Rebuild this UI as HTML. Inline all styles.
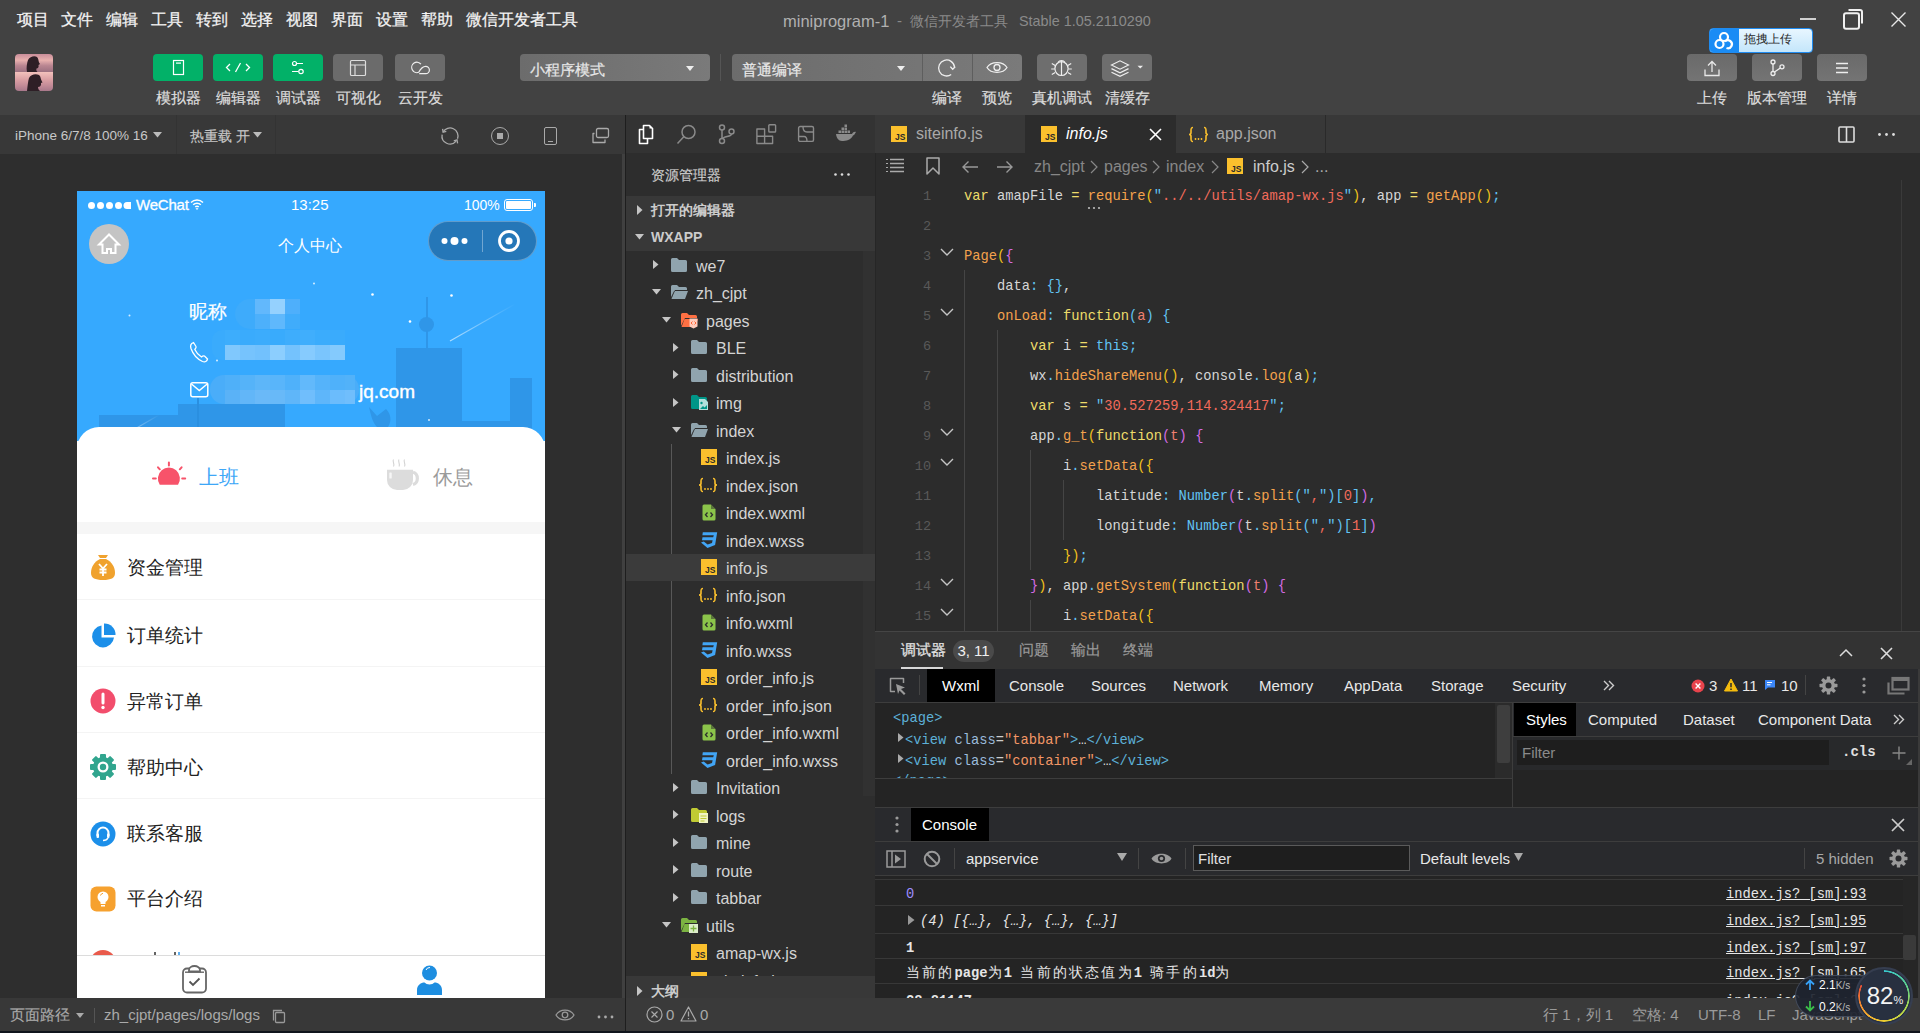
<!DOCTYPE html>
<html><head><meta charset="utf-8">
<style>
*{box-sizing:border-box}
html,body{margin:0;padding:0}
body{width:1920px;height:1033px;overflow:hidden;position:relative;background:#424242;font-family:"Liberation Sans",sans-serif;color:#ddd}
.a{position:absolute}
.t{position:absolute;white-space:nowrap}
svg{position:absolute;overflow:visible}
.mono{font-family:"Liberation Mono",monospace}
</style></head><body>

<!-- ===== MENU BAR ===== -->
<div class="a" style="left:0;top:0;width:1920px;height:115px;background:#424242"></div>
<div class="t" style="left:17px;top:0;line-height:40px;font-size:16px;color:#f4f4f4;-webkit-text-stroke:0.25px #f4f4f4">
<span style="position:absolute;left:0">项目</span><span style="position:absolute;left:44px">文件</span><span style="position:absolute;left:89px">编辑</span><span style="position:absolute;left:134px">工具</span><span style="position:absolute;left:179px">转到</span><span style="position:absolute;left:224px">选择</span><span style="position:absolute;left:269px">视图</span><span style="position:absolute;left:314px">界面</span><span style="position:absolute;left:359px">设置</span><span style="position:absolute;left:404px">帮助</span><span style="position:absolute;left:449px">微信开发者工具</span>
</div>
<div class="t" style="left:783px;top:1px;line-height:40px;font-size:16.5px;color:#b0b0b0">miniprogram-1</div>
<div class="t" style="left:897px;top:1px;line-height:40px;font-size:15px;color:#8a8a8a">-</div>
<div class="t" style="left:910px;top:1px;line-height:40px;font-size:14px;color:#8a8a8a">微信开发者工具</div>
<div class="t" style="left:1019px;top:1px;line-height:40px;font-size:14.4px;color:#8a8a8a">Stable 1.05.2110290</div>

<!-- window controls -->
<div class="a" style="left:1800px;top:18px;width:16px;height:2px;background:#d0d0d0"></div>
<svg style="left:1842px;top:8px" width="22" height="22"><rect x="2" y="5.2" width="15" height="15.5" rx="2" fill="none" stroke="#f0f0f0" stroke-width="2"/><path d="M6.5 2H18A2 2 0 0 1 20 4V15.5" fill="none" stroke="#f0f0f0" stroke-width="2"/></svg>
<svg style="left:1891px;top:12px" width="15" height="15"><path d="M0.5 0.5L14.5 14.5M14.5 0.5L0.5 14.5" stroke="#e8e8e8" stroke-width="1.4"/></svg>


<!-- ===== TOOLBAR ===== -->
<div class="a" style="left:15px;top:54px;width:38px;height:37px;border-radius:4px;overflow:hidden">
 <div class="a" style="left:0;top:0;width:38px;height:18px;background:linear-gradient(180deg,#c98e9a 0%,#e8b0ae 35%,#b98591 65%,#9c7080 100%)"></div>
 <div class="a" style="left:0;top:18px;width:38px;height:19px;background:linear-gradient(180deg,#f3c2bc 0%,#dba0a4 40%,#c48c98 70%,#a8788a 100%)"></div>
 <svg style="left:0;top:0" width="38" height="37"><path d="M12 18C11 14 12 9 13 6C15 2 20 1.5 22 3C23.5 4.5 23.5 7 24 8.5L25 10L23.5 11C24 13 23 14.5 21.5 14.5C21 16 21.5 17 22.5 18Z" fill="#2e1f26"/><path d="M12 37C12.5 33 13 27 14 24C16 20 21 19.5 24 21C26 22.5 25.5 25 26.5 26.5L27.5 28.5L26 29C26.5 31.5 25 33 23 33C23 35 24 36 25 37Z" fill="#2e1f26"/></svg>
</div>
<div class="a" style="left:153px;top:54px;width:50px;height:27px;border-radius:4px;background:#02b168"></div>
<div class="a" style="left:213px;top:54px;width:50px;height:27px;border-radius:4px;background:#02b168"></div>
<div class="a" style="left:273px;top:54px;width:50px;height:27px;border-radius:4px;background:#02b168"></div>
<div class="a" style="left:333px;top:54px;width:50px;height:27px;border-radius:4px;background:#6b6b6b"></div>
<div class="a" style="left:395px;top:54px;width:50px;height:27px;border-radius:4px;background:#6b6b6b"></div>
<svg style="left:153px;top:54px" width="50" height="27"><rect x="20.5" y="6.5" width="10" height="14" fill="none" stroke="#fff" stroke-width="1.2"/><rect x="23" y="8.5" width="5" height="1.2" fill="#fff"/></svg>
<svg style="left:213px;top:54px" width="50" height="27"><path d="M17 10L13.5 13.5L17 17M33 10L36.5 13.5L33 17M27.5 9L22.5 18" fill="none" stroke="#fff" stroke-width="1.3"/></svg>
<svg style="left:273px;top:54px" width="50" height="27"><circle cx="21.5" cy="9.5" r="2" fill="none" stroke="#fff" stroke-width="1.2"/><path d="M23.5 9.5H30M19 17.5H25.5" stroke="#fff" stroke-width="1.2"/><circle cx="28" cy="17.5" r="2.2" fill="none" stroke="#fff" stroke-width="1.2"/></svg>
<svg style="left:333px;top:54px" width="50" height="27"><rect x="17.5" y="6.5" width="15" height="15" rx="1" fill="none" stroke="#ddd" stroke-width="1.2"/><path d="M17.5 11H32.5M22 11V21.5" stroke="#ddd" stroke-width="1.2"/></svg>
<svg style="left:395px;top:54px" width="50" height="27"><path d="M25.9 10.1A5.2 5.2 0 1 0 23.7 18.3C25.3 15.3 27.3 12.3 30.7 12.3A3.7 3.7 0 0 1 30.7 19.7H24.2" fill="none" stroke="#eee" stroke-width="1.2"/></svg>
<div class="t" style="left:153px;top:88px;width:50px;text-align:center;font-size:15px;line-height:19px;color:#dcdcdc;-webkit-text-stroke:0.2px #dcdcdc">模拟器</div>
<div class="t" style="left:213px;top:88px;width:50px;text-align:center;font-size:15px;line-height:19px;color:#dcdcdc;-webkit-text-stroke:0.2px #dcdcdc">编辑器</div>
<div class="t" style="left:273px;top:88px;width:50px;text-align:center;font-size:15px;line-height:19px;color:#dcdcdc;-webkit-text-stroke:0.2px #dcdcdc">调试器</div>
<div class="t" style="left:333px;top:88px;width:50px;text-align:center;font-size:15px;line-height:19px;color:#dcdcdc;-webkit-text-stroke:0.2px #dcdcdc">可视化</div>
<div class="t" style="left:395px;top:88px;width:50px;text-align:center;font-size:15px;line-height:19px;color:#dcdcdc;-webkit-text-stroke:0.2px #dcdcdc">云开发</div>

<!-- mode dropdown -->
<div class="a" style="left:520px;top:54px;width:190px;height:27px;border-radius:4px;background:linear-gradient(90deg,#6c6c6c,#7a7a7a)"></div>
<div class="t" style="left:530px;top:56px;line-height:27px;font-size:15px;color:#e8e8e8;-webkit-text-stroke:0.2px #e8e8e8">小程序模式</div>
<svg style="left:686px;top:65.5px" width="8" height="6"><path d="M0 0H8L4 5Z" fill="#eee"/></svg>
<div class="a" style="left:720px;top:54px;width:1px;height:27px;background:#555"></div>
<!-- compile dropdown group -->
<div class="a" style="left:732px;top:54px;width:290px;height:27px;border-radius:4px;background:linear-gradient(90deg,#6c6c6c,#7a7a7a)"></div>
<div class="a" style="left:922px;top:54px;width:1px;height:27px;background:#5e5e5e"></div>
<div class="a" style="left:972px;top:54px;width:1px;height:27px;background:#5e5e5e"></div>
<div class="t" style="left:742px;top:56px;line-height:27px;font-size:15px;color:#e8e8e8;-webkit-text-stroke:0.2px #e8e8e8">普通编译</div>
<svg style="left:897px;top:65.5px" width="8" height="6"><path d="M0 0H8L4 5Z" fill="#eee"/></svg>
<svg style="left:922px;top:54px" width="50" height="27"><path d="M29.2 20.55A8 8 0 1 1 32.57 13.1" fill="none" stroke="#eee" stroke-width="1.3"/><path d="M28.3 12.6L30.7 15.2L33.2 12.8" fill="none" stroke="#eee" stroke-width="1.4"/></svg>
<svg style="left:972px;top:54px" width="50" height="27"><path d="M15 13.5C19 7 31 7 35 13.5C31 20 19 20 15 13.5Z" fill="none" stroke="#eee" stroke-width="1.3"/><circle cx="25" cy="13.5" r="3" fill="none" stroke="#eee" stroke-width="1.3"/></svg>
<div class="a" style="left:1037px;top:54px;width:50px;height:27px;border-radius:4px;background:#6e6e6e"></div>
<svg style="left:1037px;top:54px" width="50" height="27"><ellipse cx="24.5" cy="14.6" rx="6.6" ry="6.9" fill="none" stroke="#eee" stroke-width="1.2"/><path d="M21.2 8.2A3.6 2.8 0 0 1 27.8 8.2M24.5 7.8V21.5M18.2 11.5L14.8 9.5M17.9 15H14.2M18.2 18.5L14.8 20.5M30.8 11.5L34.2 9.5M31.1 15H34.8M30.8 18.5L34.2 20.5" fill="none" stroke="#eee" stroke-width="1.2"/></svg>
<div class="a" style="left:1102px;top:54px;width:50px;height:27px;border-radius:4px;background:#6e6e6e"></div>
<svg style="left:1102px;top:54px" width="50" height="27"><path d="M9.5 11L18 6.8L26.5 11L18 15.2Z" fill="none" stroke="#eee" stroke-width="1.2"/><path d="M9.5 14.6L18 18.8L26.5 14.6M9.5 18.2L18 22.4L26.5 18.2" fill="none" stroke="#eee" stroke-width="1.2"/><path d="M35.5 11.8H41L38.25 14.6Z" fill="#eee"/></svg>
<div class="t" style="left:922px;top:88px;width:50px;text-align:center;font-size:15px;line-height:19px;color:#dcdcdc;-webkit-text-stroke:0.2px #dcdcdc">编译</div>
<div class="t" style="left:972px;top:88px;width:50px;text-align:center;font-size:15px;line-height:19px;color:#dcdcdc;-webkit-text-stroke:0.2px #dcdcdc">预览</div>
<div class="t" style="left:1027px;top:88px;width:70px;text-align:center;font-size:15px;line-height:19px;color:#dcdcdc;-webkit-text-stroke:0.2px #dcdcdc">真机调试</div>
<div class="t" style="left:1092px;top:88px;width:70px;text-align:center;font-size:15px;line-height:19px;color:#dcdcdc;-webkit-text-stroke:0.2px #dcdcdc">清缓存</div>

<!-- right toolbar -->
<div class="a" style="left:1687px;top:54px;width:50px;height:27px;border-radius:4px;background:linear-gradient(180deg,#6a6a6a,#747474)"></div>
<div class="a" style="left:1752px;top:54px;width:50px;height:27px;border-radius:4px;background:linear-gradient(180deg,#6a6a6a,#747474)"></div>
<div class="a" style="left:1817px;top:54px;width:50px;height:27px;border-radius:4px;background:linear-gradient(180deg,#6a6a6a,#747474)"></div>
<svg style="left:1687px;top:54px" width="50" height="27"><path d="M18 15.5V21.5H32V15.5M25 18V8M21 11.5L25 7.5L29 11.5" fill="none" stroke="#e8e8e8" stroke-width="1.3"/></svg>
<svg style="left:1752px;top:54px" width="50" height="27"><circle cx="21" cy="8" r="2" fill="none" stroke="#eee" stroke-width="1.3"/><circle cx="21" cy="19.5" r="2" fill="none" stroke="#eee" stroke-width="1.3"/><circle cx="30" cy="12.8" r="2" fill="none" stroke="#eee" stroke-width="1.3"/><path d="M21 10V17.5M22.5 18L28.3 14" fill="none" stroke="#eee" stroke-width="1.3"/></svg>
<svg style="left:1817px;top:54px" width="50" height="27"><path d="M19 9.5H31M19 14H31M19 18.5H31" stroke="#eee" stroke-width="1.3"/></svg>
<div class="t" style="left:1687px;top:88px;width:50px;text-align:center;font-size:15px;line-height:19px;color:#dcdcdc;-webkit-text-stroke:0.2px #dcdcdc">上传</div>
<div class="t" style="left:1742px;top:88px;width:70px;text-align:center;font-size:15px;line-height:19px;color:#dcdcdc;-webkit-text-stroke:0.2px #dcdcdc">版本管理</div>
<div class="t" style="left:1817px;top:88px;width:50px;text-align:center;font-size:15px;line-height:19px;color:#dcdcdc;-webkit-text-stroke:0.2px #dcdcdc">详情</div>
<!-- drag upload popup -->
<div class="a" style="left:1709px;top:28px;width:104px;height:25px;border-radius:4px;background:linear-gradient(180deg,#e8f6ff,#c4e6fb);border:1px solid #1f8bf0;overflow:hidden">
 <div class="a" style="left:0;top:0;width:29px;height:23px;background:#1a8cf5"></div>
</div>
<svg style="left:1709px;top:28px" width="30" height="25"><circle cx="15" cy="9" r="4" fill="none" stroke="#fff" stroke-width="2.2"/><circle cx="10.5" cy="16" r="4" fill="none" stroke="#fff" stroke-width="2.2"/><path d="M16 13.5A4 4 0 1 1 17.5 20" fill="none" stroke="#fff" stroke-width="2.2"/></svg>
<div class="t" style="left:1744px;top:27px;line-height:25px;font-size:12px;color:#2a2a2a">拖拽上传</div>

<!-- ===== PANELS BACKGROUNDS ===== -->
<!-- simulator -->
<div class="a" style="left:0;top:115px;width:625px;height:39px;background:#383838"></div>
<div class="a" style="left:0;top:154px;width:625px;height:844px;background:#2e2e2e"></div>
<div class="a" style="left:0;top:998px;width:625px;height:33px;background:#383838"></div>
<div class="a" style="left:625px;top:115px;width:1px;height:916px;background:#1e1e1e"></div>
<!-- explorer -->
<div class="a" style="left:626px;top:115px;width:249px;height:38px;background:#333333"></div>
<div class="a" style="left:626px;top:153px;width:249px;height:845px;background:#2d2d2d"></div>
<!-- editor -->
<div class="a" style="left:875px;top:115px;width:1045px;height:38px;background:#383838"></div>
<div class="a" style="left:875px;top:153px;width:1045px;height:478px;background:#2c2c2c"></div>
<!-- debugger -->
<div class="a" style="left:875px;top:631px;width:1045px;height:38px;background:#333333;border-top:1px solid #454545"></div>
<div class="a" style="left:875px;top:669px;width:1045px;height:329px;background:#242424"></div>
<!-- status bar -->
<div class="a" style="left:626px;top:998px;width:1294px;height:33px;background:#3a3a3a"></div>
<div class="a" style="left:0;top:1031px;width:1920px;height:2px;background:#10141c"></div>


<!-- ===== SIMULATOR ===== -->
<div class="t" style="left:15px;top:116px;line-height:39px;font-size:13.5px;color:#c8c8c8">iPhone 6/7/8 100% 16</div>
<svg style="left:153px;top:132px" width="9" height="6"><path d="M0 0H9L4.5 5.5Z" fill="#bbb"/></svg>
<div class="a" style="left:176px;top:115px;width:1px;height:39px;background:#333"></div>
<div class="t" style="left:190px;top:116.5px;line-height:39px;font-size:14px;color:#c8c8c8;-webkit-text-stroke:0.15px #c8c8c8">热重载 开</div>
<svg style="left:253px;top:132px" width="9" height="6"><path d="M0 0H9L4.5 5.5Z" fill="#bbb"/></svg>
<div class="a" style="left:275px;top:115px;width:1px;height:39px;background:#333"></div>
<svg style="left:440px;top:126px" width="20" height="20"><path d="M3.07 6A8 8 0 0 1 17.52 12.74M16.13 15.14A8 8 0 0 1 2.12 8.61" fill="none" stroke="#aaa" stroke-width="1.3"/><path d="M2.6 2.8L3.1 6.2L6.3 5.3M17.6 17.3L17 13.9L13.8 14.8" fill="none" stroke="#aaa" stroke-width="1.3"/></svg>
<div class="a" style="left:491px;top:127px;width:18px;height:18px;border:1.4px solid #aaa;border-radius:50%"></div>
<div class="a" style="left:497px;top:133px;width:6px;height:6px;background:#aaa"></div>
<div class="a" style="left:544px;top:127px;width:13px;height:18px;border:1.3px solid #aaa;border-radius:2px"></div>
<div class="a" style="left:548px;top:141px;width:5px;height:1.3px;background:#aaa"></div>
<svg style="left:591px;top:127px" width="20" height="18"><rect x="5.5" y="1.5" width="12" height="9" rx="1.5" fill="none" stroke="#aaa" stroke-width="1.3"/><path d="M3.5 6.5H2V15.5H14V12.5" fill="none" stroke="#aaa" stroke-width="1.3" stroke-linejoin="round"/></svg>
<!-- sim scrollbar -->
<div class="a" style="left:622px;top:154px;width:3px;height:844px;background:#404040"></div>

<!-- phone -->
<div class="a" style="left:77px;top:191px;width:468px;height:807px;background:#fff;overflow:hidden">
 <div class="a" style="left:0;top:0;width:468px;height:250px;background:#36a9fe"></div>
 <!-- city silhouette -->
 <div class="a" style="left:22px;top:224px;width:80px;height:30px;background:#2f96e8"></div>
 <div class="a" style="left:101px;top:213px;width:107px;height:40px;background:#2f96e8"></div>
 <div class="a" style="left:120px;top:207px;width:2px;height:30px;background:#2a8fe0"></div>
 <div class="a" style="left:319px;top:157px;width:66px;height:100px;background:#2f96e8"></div>
 <div class="a" style="left:349px;top:106px;width:2px;height:54px;background:#2f96e8"></div>
 <div class="a" style="left:342px;top:126px;width:15px;height:15px;border-radius:50%;background:#2f96e8"></div>
 <div class="a" style="left:385px;top:230px;width:48px;height:30px;background:#2f96e8"></div>
 <div class="a" style="left:433px;top:187px;width:22px;height:70px;background:#2f96e8"></div>
 <svg style="left:291px;top:215px" width="26" height="22"><path d="M1 1L9 10L18 3C23 8 24 15 20 21H9C5 17 3 10 1 1Z" fill="#2f96e8"/></svg>
 <div class="a" style="left:43px;top:262px;width:2px;height:2px;background:#fff"></div>
 <svg style="left:0;top:0" width="468" height="250">
  <defs><linearGradient id="ss" x1="0" y1="1" x2="1" y2="0"><stop offset="0" stop-color="#fff" stop-opacity="0.6"/><stop offset="1" stop-color="#fff" stop-opacity="0"/></linearGradient></defs><path d="M373 150L438 113" stroke="url(#ss)" stroke-width="1.2"/><path d="M44 246L82 224" stroke="url(#ss)" stroke-width="1.2"/>
  <circle cx="237" cy="92.5" r="1" fill="#fff" opacity="0.8"/><circle cx="295.5" cy="103.5" r="1.3" fill="#fff"/><circle cx="374.5" cy="104.5" r="1.3" fill="#fff"/>
  <circle cx="333" cy="130.5" r="1.3" fill="#fff"/><circle cx="52.5" cy="124.5" r="1" fill="#fff" opacity="0.8"/><circle cx="140" cy="169.5" r="1" fill="#fff" opacity="0.8"/>
  <circle cx="352" cy="229" r="1" fill="#fff" opacity="0.8"/>
 </svg>
 <!-- status bar -->
 <svg style="left:11px;top:10px" width="50" height="9"><circle cx="3.5" cy="4.5" r="3.5" fill="#fff"/><circle cx="12.5" cy="4.5" r="3.5" fill="#fff"/><circle cx="21.5" cy="4.5" r="3.5" fill="#fff"/><circle cx="30.5" cy="4.5" r="3.5" fill="#fff"/><path d="M39 1A3.5 3.5 0 0 0 39 8H43V1Z" fill="#fff"/></svg>
 <div class="t" style="left:59px;top:4px;line-height:20px;font-size:15px;color:#fff;-webkit-text-stroke:0.3px #fff;letter-spacing:-0.2px">WeChat</div>
 <svg style="left:113px;top:7px" width="14" height="12"><path d="M1 4.5A8.5 8.5 0 0 1 13 4.5M3.2 6.8A5.3 5.3 0 0 1 10.8 6.8M5.3 9A2.3 2.3 0 0 1 8.7 9" fill="none" stroke="#fff" stroke-width="1.5"/><path d="M5.5 10.2L7 12L8.5 10.2Z" fill="#fff"/></svg>
 <div class="t" style="left:214px;top:4px;line-height:20px;font-size:15px;color:#fff">13:25</div>
 <div class="t" style="left:387px;top:4px;line-height:20px;font-size:14px;color:#fff">100%</div>
 <div class="a" style="left:427px;top:8px;width:29px;height:12px;border:1px solid #fff;border-radius:3px"></div>
 <div class="a" style="left:429px;top:10px;width:25px;height:8px;background:#fff;border-radius:1px"></div>
 <div class="a" style="left:457px;top:12px;width:2px;height:4px;background:#fff;border-radius:0 1px 1px 0"></div>
 <!-- nav -->
 <div class="a" style="left:12px;top:33px;width:40px;height:40px;border-radius:50%;background:#c4c4c4"></div>
 <svg style="left:12px;top:33px" width="40" height="40"><path d="M20 10.5L10 20.5H13.5V29H18V25H22V29H26.5V20.5H30Z" fill="none" stroke="#fff" stroke-width="2" stroke-linejoin="miter"/></svg>
 <div class="t" style="left:201px;top:44px;line-height:22px;font-size:16px;color:#fff">个人中心</div>
 <div class="a" style="left:351px;top:30px;width:109px;height:40px;border-radius:20px;background:#2577b8;border:1px solid rgba(255,255,255,0.28)"></div>
 <div class="a" style="left:405px;top:39px;width:1px;height:22px;background:rgba(255,255,255,0.35)"></div>
 <svg style="left:351px;top:30px" width="109" height="40"><circle cx="16.5" cy="20" r="3" fill="#fff"/><circle cx="26.5" cy="20" r="4" fill="#fff"/><circle cx="36.5" cy="20" r="3" fill="#fff"/><circle cx="81" cy="20" r="9.5" fill="none" stroke="#fff" stroke-width="2.8"/><circle cx="81" cy="20" r="3.6" fill="#fff"/></svg>
 <!-- user info -->
 <div class="t" style="left:112px;top:109px;line-height:24px;font-size:19px;color:#fff;-webkit-text-stroke:0.2px #fff">昵称</div>
 <div class="a" style="left:158px;top:108px;width:65px;height:30px;border-radius:15px 0 0 15px;background:#3eabfb"></div>
 <div class="a" style="left:178px;top:108px;width:15px;height:15px;background:#62b8fc"></div>
 <div class="a" style="left:193px;top:108px;width:15px;height:15px;background:#95d1fe"></div>
 <div class="a" style="left:208px;top:108px;width:15px;height:15px;background:#4eaffb"></div>
 <div class="a" style="left:178px;top:123px;width:15px;height:15px;background:#4db0fb"></div>
 <div class="a" style="left:193px;top:123px;width:15px;height:15px;background:#5fb8fc"></div>
 <div class="a" style="left:208px;top:123px;width:15px;height:15px;background:#40acfb"></div>
 <svg style="left:112px;top:150px" width="20" height="22"><path d="M4.5 1.5C2 2.5 1 4.5 2 7.5C4 13 8 18 13.5 20.5C16 21.3 18 20.5 18.5 18L15.5 15C14.5 14.5 13 15.5 12.5 16C10 14.5 7 11 5.8 8.5C6.5 7.5 7.5 6.5 7 5.5Z" fill="none" stroke="#fff" stroke-width="1.3"/></svg>
 <div class="a" style="left:135px;top:139px;width:133px;height:30px;border-radius:10px 10px 0 10px;background:#3aabfc"></div>
 <div class="a" style="left:148px;top:154px;width:15px;height:15px;background:#80c8fd"></div>
 <div class="a" style="left:148px;top:139px;width:15px;height:15px;background:#3dadfc"></div>
 <div class="a" style="left:163px;top:154px;width:15px;height:15px;background:#76c3fd"></div>
 <div class="a" style="left:163px;top:139px;width:15px;height:15px;background:#3aabfc"></div>
 <div class="a" style="left:178px;top:154px;width:15px;height:15px;background:#72c1fd"></div>
 <div class="a" style="left:178px;top:139px;width:15px;height:15px;background:#3cacfc"></div>
 <div class="a" style="left:193px;top:154px;width:15px;height:15px;background:#8ccefe"></div>
 <div class="a" style="left:193px;top:139px;width:15px;height:15px;background:#39abfc"></div>
 <div class="a" style="left:208px;top:154px;width:15px;height:15px;background:#74c2fd"></div>
 <div class="a" style="left:208px;top:139px;width:15px;height:15px;background:#3eadfc"></div>
 <div class="a" style="left:223px;top:154px;width:15px;height:15px;background:#86cbfe"></div>
 <div class="a" style="left:223px;top:139px;width:15px;height:15px;background:#40aefc"></div>
 <div class="a" style="left:238px;top:154px;width:15px;height:15px;background:#7ac5fd"></div>
 <div class="a" style="left:238px;top:139px;width:15px;height:15px;background:#3bacfc"></div>
 <div class="a" style="left:253px;top:154px;width:15px;height:15px;background:#84cafd"></div>
 <div class="a" style="left:253px;top:139px;width:15px;height:15px;background:#3aabfc"></div>
 <svg style="left:113px;top:191px" width="19" height="16"><rect x="0.8" y="0.8" width="17" height="14" rx="2" fill="none" stroke="#fff" stroke-width="1.5"/><path d="M1.5 2L9.3 8.5L17.2 2" fill="none" stroke="#fff" stroke-width="1.5"/></svg>
 <div class="t" style="left:282px;top:188px;line-height:26px;font-size:19px;color:#fff;-webkit-text-stroke:0.4px #fff">jq.com</div>
 <div class="a" style="left:133px;top:184px;width:149px;height:29px;border-radius:14px;background:#4aadf9"></div>
 <div class="a" style="left:148px;top:184px;width:15px;height:15px;background:#4fb0f9"></div>
 <div class="a" style="left:148px;top:199px;width:15px;height:14px;background:#5ab2f7"></div>
 <div class="a" style="left:163px;top:184px;width:15px;height:15px;background:#55b3f9"></div>
 <div class="a" style="left:163px;top:199px;width:15px;height:14px;background:#62b6f8"></div>
 <div class="a" style="left:178px;top:184px;width:15px;height:15px;background:#5db6f9"></div>
 <div class="a" style="left:178px;top:199px;width:15px;height:14px;background:#6ab9f8"></div>
 <div class="a" style="left:193px;top:184px;width:15px;height:15px;background:#59b5fa"></div>
 <div class="a" style="left:193px;top:199px;width:15px;height:14px;background:#68b9f8"></div>
 <div class="a" style="left:208px;top:184px;width:15px;height:15px;background:#4fb1fa"></div>
 <div class="a" style="left:208px;top:199px;width:15px;height:14px;background:#5fb6f9"></div>
 <div class="a" style="left:223px;top:184px;width:15px;height:15px;background:#62b9fb"></div>
 <div class="a" style="left:223px;top:199px;width:15px;height:14px;background:#70befc"></div>
 <div class="a" style="left:238px;top:184px;width:15px;height:15px;background:#55b3fa"></div>
 <div class="a" style="left:238px;top:199px;width:15px;height:14px;background:#5eb6fa"></div>
 <div class="a" style="left:253px;top:184px;width:15px;height:15px;background:#4fb1fa"></div>
 <div class="a" style="left:253px;top:199px;width:15px;height:14px;background:#6bbcfc"></div>
 <div class="a" style="left:268px;top:184px;width:10px;height:15px;background:#52b2f9"></div>
 <div class="a" style="left:268px;top:199px;width:10px;height:14px;background:#70befc"></div>
 <!-- card -->
 <div class="a" style="left:0;top:236px;width:468px;height:571px;background:#fff;border-radius:22px 22px 0 0"></div>
 <svg style="left:75px;top:270px" width="36" height="26"><path d="M7.75 23.7A11 11 0 1 1 26.05 23.7Z" fill="#f7536a"/><path d="M16.9 1.5V4.6M6 6.3L7.8 8.3M27.8 8.3L29.6 6.3M1 17.6H3.8M30.2 17.6H33.2" stroke="#f7536a" stroke-width="2" stroke-linecap="round"/></svg>
 <div class="t" style="left:122px;top:273px;line-height:26px;font-size:20px;color:#3ea7f7">上班</div>
 <svg style="left:309px;top:267px" width="38" height="34"><path d="M1 11.8H27V22A10 10 0 0 1 17 32H11A10 10 0 0 1 1 22Z" fill="#dcdcdc"/><path d="M27 14.3A5.8 6.3 0 0 1 27 26.5" fill="none" stroke="#dcdcdc" stroke-width="3.2"/><path d="M7.5 1.5C6 3.5 9 5.5 7.5 8.5M13 1.5C11.5 3.5 14.5 5.5 13 8.5M18.5 1.5C17 3.5 20 5.5 18.5 8.5" fill="none" stroke="#d4d4d4" stroke-width="1.1"/><rect x="3.3" y="14.5" width="2.4" height="6" rx="0.6" fill="#f6f6f6"/></svg>
 <div class="t" style="left:356px;top:273px;line-height:26px;font-size:20px;color:#9a9a9a">休息</div>
 <div class="a" style="left:0;top:331px;width:468px;height:12px;background:#f6f6f6"></div>
 <!-- menu -->
 <div class="a" style="left:0;top:408px;width:468px;height:1px;background:#f4f4f4"></div>
 <div class="a" style="left:0;top:475px;width:468px;height:1px;background:#f4f4f4"></div>
 <div class="a" style="left:0;top:541px;width:468px;height:1px;background:#f4f4f4"></div>
 <div class="a" style="left:0;top:607px;width:468px;height:1px;background:#f4f4f4"></div>
 <div class="t" style="left:50px;top:364px;line-height:26px;font-size:19px;color:#222">资金管理</div>
 <div class="t" style="left:50px;top:431.5px;line-height:26px;font-size:19px;color:#222">订单统计</div>
 <div class="t" style="left:50px;top:497.5px;line-height:26px;font-size:19px;color:#222">异常订单</div>
 <div class="t" style="left:50px;top:564px;line-height:26px;font-size:19px;color:#222">帮助中心</div>
 <div class="t" style="left:50px;top:630px;line-height:26px;font-size:19px;color:#222">联系客服</div>
 <div class="t" style="left:50px;top:695px;line-height:26px;font-size:19px;color:#222">平台介绍</div>
 <svg style="left:13px;top:363px" width="26" height="27"><path d="M8 1H18L16 4H10Z" fill="#f0a22e"/><path d="M10 5H16C22 8 25 13 25 19C25 24 21 26 13 26C5 26 1 24 1 19C1 13 4 8 10 5Z" fill="#f0a22e"/><path d="M9 10L13 14.5L17 10M13 14.5V22M9.5 15.5H16.5M9.5 18.5H16.5" fill="none" stroke="#fff" stroke-width="1.8"/></svg>
 <svg style="left:12.5px;top:431.5px" width="26" height="26"><path d="M11.5 2.5A11 11 0 1 0 24 14.5H11.5Z" fill="#1c8fe9"/><path d="M14 0.5A11 11 0 0 1 25.5 12H14Z" fill="#1c8fe9"/></svg>
 <svg style="left:13px;top:497px" width="26" height="26"><circle cx="13" cy="13" r="12.5" fill="#f24d6c"/><path d="M13 6V15" stroke="#fff" stroke-width="3" stroke-linecap="round"/><circle cx="13" cy="19.5" r="1.7" fill="#fff"/></svg>
 <svg style="left:13px;top:563px" width="26" height="26"><g fill="#31a58e"><circle cx="13" cy="13" r="10"/><rect x="10" y="0" width="6" height="26" rx="1"/><rect x="10" y="0" width="6" height="26" rx="1" transform="rotate(45 13 13)"/><rect x="10" y="0" width="6" height="26" rx="1" transform="rotate(90 13 13)"/><rect x="10" y="0" width="6" height="26" rx="1" transform="rotate(135 13 13)"/></g><circle cx="13" cy="13" r="5.5" fill="#fff"/><circle cx="13" cy="13" r="3.2" fill="#31a58e"/></svg>
 <svg style="left:13px;top:629.5px" width="26" height="26"><circle cx="13" cy="13" r="12.5" fill="#1c8fe9"/><path d="M7.5 15V12A5.5 5.5 0 0 1 18.5 12V15" fill="none" stroke="#fff" stroke-width="2"/><rect x="6.5" y="12.5" width="2.5" height="4.5" rx="1" fill="#fff"/><rect x="17" y="12.5" width="2.5" height="4.5" rx="1" fill="#fff"/><path d="M18 17C17 19 15 19.5 13 19.5" fill="none" stroke="#fff" stroke-width="1.5"/></svg>
 <svg style="left:13px;top:695px" width="26" height="26"><rect x="0.5" y="0.5" width="25" height="25" rx="6" fill="#f6a12f"/><circle cx="13" cy="11" r="5.5" fill="#fff"/><rect x="10.5" y="16" width="5" height="2" fill="#fff"/><rect x="11" y="19" width="4" height="1.5" fill="#fff"/><path d="M10.5 9.5A3 3 0 0 1 13 7.3" stroke="#f6a12f" stroke-width="1" fill="none"/></svg>
 <div class="a" style="left:13px;top:759px;width:26px;height:26px;border-radius:50%;background:#e95a4b"></div>
 <div class="a" style="left:77px;top:761px;width:2px;height:3px;background:#222;opacity:.7"></div><div class="a" style="left:97px;top:761px;width:2px;height:3px;background:#222;opacity:.7"></div><div class="a" style="left:101px;top:761px;width:2px;height:3px;background:#1c8fe9;opacity:.7"></div>
 <!-- tab bar -->
 <div class="a" style="left:0;top:764px;width:468px;height:43px;background:#fff;border-top:1px solid #dcdcdc"></div>
 <svg style="left:105px;top:774px" width="26" height="29"><rect x="1" y="3.5" width="23" height="24" rx="4" fill="none" stroke="#666" stroke-width="1.8"/><path d="M7 6.5V5A5.5 4 0 0 1 18 5V6.5Z" fill="#fff" stroke="#666" stroke-width="1.8"/><path d="M3 7.2H22" stroke="#666" stroke-width="1.4"/><path d="M7.5 16.5L11 20L17.5 13.5" fill="none" stroke="#555" stroke-width="1.8"/></svg>
 <svg style="left:339.5px;top:773.5px" width="26" height="31"><circle cx="12.5" cy="8" r="7.5" fill="#1e8ee0"/><path d="M0 30V25C0 20 4 17.5 7.5 17.5A6 4.5 0 0 0 17.5 17.5C21 17.5 25 20 25 25V30Z" fill="#1e8ee0"/><path d="M9 5A4 3.5 0 0 1 13 2.5" stroke="#fff" stroke-width="1" fill="none"/></svg>
</div>
<!-- sim status bar -->
<div class="t" style="left:10px;top:998px;line-height:33px;font-size:15px;color:#aaa;-webkit-text-stroke:0.15px #aaa">页面路径</div>
<svg style="left:76px;top:1013px" width="8" height="5"><path d="M0 0H8L4 5Z" fill="#aaa"/></svg>
<div class="a" style="left:94px;top:1008px;width:1px;height:15px;background:#555"></div>
<div class="t" style="left:104px;top:998px;line-height:33px;font-size:15px;color:#aaa">zh_cjpt/pages/logs/logs</div>
<svg style="left:270px;top:1008px" width="16" height="16"><path d="M3.5 12.5V2.5H12" fill="none" stroke="#999" stroke-width="1.3"/><rect x="5.5" y="4.5" width="9" height="10" rx="1" fill="none" stroke="#999" stroke-width="1.3"/></svg>
<svg style="left:555px;top:1008px" width="20" height="14"><path d="M1 7C5 0.5 15 0.5 19 7C15 13.5 5 13.5 1 7Z" fill="none" stroke="#999" stroke-width="1.3"/><circle cx="10" cy="7" r="2.8" fill="none" stroke="#999" stroke-width="1.3"/></svg>
<svg style="left:597px;top:1015px" width="18" height="4"><circle cx="2" cy="2" r="1.4" fill="#aaa"/><circle cx="8.5" cy="2" r="1.4" fill="#aaa"/><circle cx="15" cy="2" r="1.4" fill="#aaa"/></svg>




















<!-- ===== DEBUGGER ===== -->
<div class="t" style="left:901px;top:631px;line-height:38px;font-size:15px;color:#e0e0e0;-webkit-text-stroke:0.3px #e0e0e0">调试器</div>
<div class="a" style="left:901px;top:667px;width:42px;height:2px;background:#d8d8d8"></div>
<div class="a" style="left:953px;top:640px;width:41px;height:22px;border-radius:11px;background:#4a4a4a"></div>
<div class="t" style="left:953px;top:640px;width:41px;text-align:center;line-height:22px;font-size:15px;color:#f0f0f0">3, 11</div>
<div class="t" style="left:1019px;top:631px;line-height:38px;font-size:15px;color:#9a9a9a;-webkit-text-stroke:0.2px #9a9a9a">问题</div>
<div class="t" style="left:1071px;top:631px;line-height:38px;font-size:15px;color:#9a9a9a;-webkit-text-stroke:0.2px #9a9a9a">输出</div>
<div class="t" style="left:1123px;top:631px;line-height:38px;font-size:15px;color:#9a9a9a;-webkit-text-stroke:0.2px #9a9a9a">终端</div>
<svg style="left:1839px;top:648px" width="14" height="9"><path d="M1 8L7 2L13 8" fill="none" stroke="#ddd" stroke-width="1.5"/></svg>
<svg style="left:1880px;top:647px" width="13" height="13"><path d="M1 1L12 12M12 1L1 12" stroke="#ddd" stroke-width="1.6"/></svg>

<!-- devtools main toolbar -->
<div class="a" style="left:875px;top:669px;width:1045px;height:33px;background:#292a2d"></div>
<div class="a" style="left:875px;top:702px;width:1045px;height:1px;background:#3d3d3d"></div>
<svg style="left:889px;top:677px" width="18" height="18"><path d="M6 14.5H1.5V1.5H14.5V6" fill="none" stroke="#9a9a9a" stroke-width="1.5" stroke-linejoin="round"/><path d="M7 7L16 10.5L12 12L16.5 16.5L15 18L10.5 13.5L9 17Z" fill="#9a9a9a"/></svg>
<div class="a" style="left:919px;top:675px;width:1px;height:20px;background:#444"></div>
<div class="a" style="left:927px;top:669px;width:68px;height:33px;background:#000"></div>
<div class="t" style="left:942px;top:669px;line-height:33px;font-size:15px;color:#fff">Wxml</div>
<div class="t" style="left:1009px;top:669px;line-height:33px;font-size:15px;color:#e8e8e8">Console</div>
<div class="t" style="left:1091px;top:669px;line-height:33px;font-size:15px;color:#e8e8e8">Sources</div>
<div class="t" style="left:1173px;top:669px;line-height:33px;font-size:15px;color:#e8e8e8">Network</div>
<div class="t" style="left:1259px;top:669px;line-height:33px;font-size:15px;color:#e8e8e8">Memory</div>
<div class="t" style="left:1344px;top:669px;line-height:33px;font-size:15px;color:#e8e8e8">AppData</div>
<div class="t" style="left:1431px;top:669px;line-height:33px;font-size:15px;color:#e8e8e8">Storage</div>
<div class="t" style="left:1512px;top:669px;line-height:33px;font-size:15px;color:#e8e8e8">Security</div>
<svg style="left:1603px;top:680px" width="12" height="11"><path d="M1 1L5.5 5.5L1 10M6 1L10.5 5.5L6 10" fill="none" stroke="#ccc" stroke-width="1.4"/></svg>
<svg style="left:1691px;top:679px" width="14" height="14"><circle cx="7" cy="7" r="6.5" fill="#e8434c"/><path d="M4.6 4.6L9.4 9.4M9.4 4.6L4.6 9.4" stroke="#fff" stroke-width="1.4"/></svg>
<div class="t" style="left:1709px;top:669px;line-height:33px;font-size:15px;color:#e8e8e8">3</div>
<svg style="left:1724px;top:678px" width="14" height="14"><path d="M7 1L13.5 13H0.5Z" fill="#f4bb0e" stroke="#f4bb0e" stroke-width="1" stroke-linejoin="round"/><path d="M7 5V9.3M7 10.5V12" stroke="#292a2d" stroke-width="1.5"/></svg>
<div class="t" style="left:1742px;top:669px;line-height:33px;font-size:15px;color:#e8e8e8">11</div>
<svg style="left:1764px;top:679px" width="12" height="12"><path d="M1 1H11V8.5H4L1 11Z" fill="#3b86f7"/><path d="M3 3.5H8M3 5.8H6.5" stroke="#fff" stroke-width="1"/></svg>
<div class="t" style="left:1781px;top:669px;line-height:33px;font-size:15px;color:#e8e8e8">10</div>
<div class="a" style="left:1805px;top:675px;width:1px;height:20px;background:#444"></div>
<svg style="left:1819px;top:676px" width="19" height="19"><g fill="#9a9a9a"><circle cx="9.5" cy="9.5" r="6.5"/><rect x="7.8" y="0.5" width="3.4" height="18" rx="0.6"/><rect x="7.8" y="0.5" width="3.4" height="18" rx="0.6" transform="rotate(45 9.5 9.5)"/><rect x="7.8" y="0.5" width="3.4" height="18" rx="0.6" transform="rotate(90 9.5 9.5)"/><rect x="7.8" y="0.5" width="3.4" height="18" rx="0.6" transform="rotate(135 9.5 9.5)"/></g><circle cx="9.5" cy="9.5" r="3" fill="#292a2d"/></svg>
<svg style="left:1862px;top:677px" width="4" height="17"><circle cx="2" cy="2" r="1.6" fill="#9a9a9a"/><circle cx="2" cy="8.5" r="1.6" fill="#9a9a9a"/><circle cx="2" cy="15" r="1.6" fill="#9a9a9a"/></svg>
<svg style="left:1887px;top:676px" width="23" height="19"><path d="M1.5 6.5V17.5H17.5" fill="none" stroke="#777" stroke-width="2.2"/><rect x="5.5" y="2" width="16" height="11.5" fill="none" stroke="#777" stroke-width="2.2"/><rect x="5.5" y="2" width="16" height="3" fill="#777"/></svg>

<!-- elements panel -->
<div class="a" style="left:875px;top:703px;width:637px;height:104px;background:#242424"></div>
<div class="t mono" style="left:893px;top:708px;line-height:21px;font-size:13.75px;color:#5db0d7">&lt;page&gt;</div>
<svg style="left:898px;top:733px" width="6" height="10"><path d="M0 0V9L5.5 4.5Z" fill="#aaa"/></svg>
<div class="t mono" style="left:905px;top:729.5px;line-height:21px;font-size:13.75px;color:#5db0d7">&lt;view <span style="color:#9bbbdc">class</span><span style="color:#ccc">=</span><span style="color:#f29766">"tabbar"</span>&gt;<span style="color:#ddd">…</span>&lt;/view&gt;</div>
<svg style="left:898px;top:754px" width="6" height="10"><path d="M0 0V9L5.5 4.5Z" fill="#aaa"/></svg>
<div class="t mono" style="left:905px;top:750.5px;line-height:21px;font-size:13.75px;color:#5db0d7">&lt;view <span style="color:#9bbbdc">class</span><span style="color:#ccc">=</span><span style="color:#f29766">"container"</span>&gt;<span style="color:#ddd">…</span>&lt;/view&gt;</div>
<div class="a" style="left:875px;top:770px;width:620px;height:8px;overflow:hidden"><div class="t mono" style="left:18px;top:1px;line-height:21px;font-size:13.75px;color:#5db0d7">&lt;/page&gt;</div></div>
<div class="a" style="left:875px;top:778px;width:637px;height:1px;background:#3d3d3d"></div>
<div class="a" style="left:1495px;top:703px;width:17px;height:75px;background:#2b2b2b"></div>
<div class="a" style="left:1497px;top:705px;width:13px;height:58px;border-radius:2px;background:#3e3e3e"></div>
<div class="a" style="left:1512px;top:703px;width:1px;height:104px;background:#3d3d3d"></div>
<!-- styles pane -->
<div class="a" style="left:1513px;top:703px;width:407px;height:33px;background:#292a2d"></div>
<div class="a" style="left:1514px;top:703px;width:62px;height:33px;background:#000"></div>
<div class="t" style="left:1526px;top:703px;line-height:33px;font-size:15px;color:#fff">Styles</div>
<div class="t" style="left:1588px;top:703px;line-height:33px;font-size:15px;color:#e8e8e8">Computed</div>
<div class="t" style="left:1683px;top:703px;line-height:33px;font-size:15px;color:#e8e8e8">Dataset</div>
<div class="t" style="left:1758px;top:703px;line-height:33px;font-size:15px;color:#e8e8e8">Component Data</div>
<svg style="left:1893px;top:714px" width="12" height="11"><path d="M1 1L5.5 5.5L1 10M6 1L10.5 5.5L6 10" fill="none" stroke="#ccc" stroke-width="1.4"/></svg>
<div class="a" style="left:1513px;top:736px;width:407px;height:1px;background:#3d3d3d"></div>
<div class="a" style="left:1513px;top:737px;width:407px;height:33px;background:#28292b"></div>
<div class="a" style="left:1517px;top:740px;width:312px;height:25px;background:#1e1e1e"></div>
<div class="t" style="left:1522px;top:740px;line-height:25px;font-size:15px;color:#8a8a8a">Filter</div>
<div class="t mono" style="left:1842px;top:740px;line-height:25px;font-size:14px;font-weight:bold;color:#e0e0e0">.cls</div>
<svg style="left:1892px;top:746px" width="14" height="14"><path d="M7 0.5V13.5M0.5 7H13.5" stroke="#888" stroke-width="1.4"/></svg>
<svg style="left:1906px;top:759px" width="6" height="6"><path d="M6 0V6H0Z" fill="#666"/></svg>
<div class="a" style="left:1513px;top:770px;width:407px;height:37px;background:#242424"></div>

<!-- console drawer -->
<div class="a" style="left:875px;top:807px;width:1045px;height:1px;background:#3d3d3d"></div>
<div class="a" style="left:875px;top:808px;width:1045px;height:33px;background:#292a2d"></div>
<svg style="left:895px;top:816px" width="4" height="17"><circle cx="2" cy="2" r="1.6" fill="#9a9a9a"/><circle cx="2" cy="8.5" r="1.6" fill="#9a9a9a"/><circle cx="2" cy="15" r="1.6" fill="#9a9a9a"/></svg>
<div class="a" style="left:911px;top:808px;width:78px;height:33px;background:#000"></div>
<div class="t" style="left:922px;top:808px;line-height:33px;font-size:15px;color:#fff">Console</div>
<svg style="left:1891px;top:818px" width="14" height="14"><path d="M1 1L13 13M13 1L1 13" stroke="#ccc" stroke-width="1.7"/></svg>
<div class="a" style="left:875px;top:841px;width:1045px;height:1px;background:#3d3d3d"></div>
<div class="a" style="left:875px;top:842px;width:1045px;height:33px;background:#292a2d"></div>
<svg style="left:886px;top:850px" width="20" height="18"><rect x="1" y="1" width="18" height="16" fill="none" stroke="#9a9a9a" stroke-width="1.5"/><path d="M6 1V17" stroke="#9a9a9a" stroke-width="1.5"/><path d="M9 4.5V13.5L15 9Z" fill="#9a9a9a"/></svg>
<svg style="left:923px;top:850px" width="18" height="18"><circle cx="9" cy="9" r="7.3" fill="none" stroke="#9a9a9a" stroke-width="2"/><path d="M4 4L14 14" stroke="#9a9a9a" stroke-width="2"/></svg>
<div class="a" style="left:954px;top:848px;width:1px;height:21px;background:#444"></div>
<div class="t" style="left:966px;top:842px;line-height:33px;font-size:15px;color:#e8e8e8">appservice</div>
<svg style="left:1117px;top:853px" width="10" height="8"><path d="M0 0H10L5 8Z" fill="#aaa"/></svg>
<div class="a" style="left:1138px;top:848px;width:1px;height:21px;background:#444"></div>
<svg style="left:1151px;top:852px" width="21" height="13"><path d="M0.5 6.5C4 0 17 0 20.5 6.5C17 13 4 13 0.5 6.5Z" fill="#9a9a9a"/><circle cx="10.5" cy="6.5" r="3.6" fill="#292a2d"/><circle cx="10.5" cy="6.5" r="1.8" fill="#9a9a9a"/></svg>
<div class="a" style="left:1185px;top:848px;width:1px;height:21px;background:#444"></div>
<div class="a" style="left:1193px;top:845px;width:217px;height:26px;background:#1e1e1e;border:1px solid #5a5a5a"></div>
<div class="t" style="left:1198px;top:845px;line-height:27px;font-size:15px;color:#e0e0e0">Filter</div>
<div class="t" style="left:1420px;top:842px;line-height:33px;font-size:15px;color:#e8e8e8">Default levels</div>
<svg style="left:1514px;top:853px" width="9" height="8"><path d="M0 0H9L4.5 8Z" fill="#aaa"/></svg>
<div class="a" style="left:1804px;top:848px;width:1px;height:21px;background:#444"></div>
<div class="t" style="left:1816px;top:842px;line-height:33px;font-size:15px;color:#a8a8a8">5 hidden</div>
<svg style="left:1889px;top:849px" width="19" height="19"><g fill="#9a9a9a"><circle cx="9.5" cy="9.5" r="6.5"/><rect x="7.8" y="0.5" width="3.4" height="18" rx="0.6"/><rect x="7.8" y="0.5" width="3.4" height="18" rx="0.6" transform="rotate(45 9.5 9.5)"/><rect x="7.8" y="0.5" width="3.4" height="18" rx="0.6" transform="rotate(90 9.5 9.5)"/><rect x="7.8" y="0.5" width="3.4" height="18" rx="0.6" transform="rotate(135 9.5 9.5)"/></g><circle cx="9.5" cy="9.5" r="3" fill="#292a2d"/></svg>
<div class="a" style="left:875px;top:875px;width:1045px;height:1px;background:#3d3d3d"></div>
<div class="a" style="left:875px;top:876px;width:1045px;height:122px;background:#242424"></div>
<div class="a" style="left:875px;top:879px;width:1030px;height:1px;background:#383838"></div>
<div class="a" style="left:875px;top:905px;width:1030px;height:1px;background:#383838"></div>
<div class="a" style="left:875px;top:933px;width:1030px;height:1px;background:#383838"></div>
<div class="a" style="left:875px;top:958px;width:1030px;height:1px;background:#383838"></div>
<div class="a" style="left:875px;top:983px;width:1030px;height:1px;background:#383838"></div>
<div class="t mono" style="left:906px;top:882px;line-height:25px;font-size:13.75px;color:#9d8cfc">0</div>
<svg style="left:908px;top:915px" width="7" height="10"><path d="M0 0V10L6.5 5Z" fill="#999"/></svg>
<div class="t mono" style="left:920px;top:908px;line-height:27px;font-size:13.75px;font-style:italic;color:#e6e6e6">(4) [{…}, {…}, {…}, {…}]</div>
<div class="t mono" style="left:906px;top:936px;line-height:25px;font-size:13.75px;font-weight:bold;color:#e6e6e6">1</div>
<div class="t mono" style="left:906px;top:961px;line-height:25px;font-size:13.75px;color:#e6e6e6"><span style="font-size:14px;letter-spacing:2.2px">当前的</span><b>page</b><span style="font-size:14px;letter-spacing:2.2px">为</span><b>1</b> <span style="font-size:14px;letter-spacing:2.2px">当前的状态值为</span><b>1</b> <span style="font-size:14px;letter-spacing:2.2px">骑手的</span><b>id</b><span style="font-size:14px;letter-spacing:2.2px">为</span></div>
<div class="a" style="left:875px;top:984px;width:1030px;height:14px;overflow:hidden"><div class="t mono" style="left:31px;top:5px;line-height:25px;font-size:13.75px;font-weight:bold;color:#e6e6e6">28.81147</div><div class="t mono" style="left:851px;top:5px;line-height:25px;font-size:13.75px;color:#e6e6e6;text-decoration:underline">index.js?&nbsp;[sm]:65</div></div>
<div class="t mono" style="left:1726px;top:882px;line-height:25px;font-size:13.75px;color:#e6e6e6;text-decoration:underline">index.js?&nbsp;[sm]:93</div>
<div class="t mono" style="left:1726px;top:908px;line-height:27px;font-size:13.75px;color:#e6e6e6;text-decoration:underline">index.js?&nbsp;[sm]:95</div>
<div class="t mono" style="left:1726px;top:936px;line-height:25px;font-size:13.75px;color:#e6e6e6;text-decoration:underline">index.js?&nbsp;[sm]:97</div>
<div class="t mono" style="left:1726px;top:961px;line-height:25px;font-size:13.75px;color:#e6e6e6;text-decoration:underline">index.js?&nbsp;[sm]:65</div>
<div class="a" style="left:1903px;top:876px;width:15px;height:122px;background:#262626"></div>
<div class="a" style="left:1903px;top:935px;width:13px;height:25px;border-radius:2px;background:#3a3a3a"></div>
<div class="a" style="left:1918px;top:669px;width:2px;height:329px;background:#3a3a3a"></div>

<!-- status bar right -->
<div class="t" style="left:1543px;top:998px;line-height:33px;font-size:15px;color:#9a9a9a">行 1，列 1</div>
<div class="t" style="left:1632px;top:998px;line-height:33px;font-size:15px;color:#9a9a9a">空格: 4</div>
<div class="t" style="left:1698px;top:998px;line-height:33px;font-size:15px;color:#9a9a9a">UTF-8</div>
<div class="t" style="left:1758px;top:998px;line-height:33px;font-size:15px;color:#9a9a9a">LF</div>
<div class="t" style="left:1792px;top:998px;line-height:33px;font-size:15px;color:#9a9a9a">JavaScript</div>
<!-- network widget -->
<div class="a" style="left:1795px;top:975px;width:100px;height:42px;border-radius:21px;background:rgba(30,36,48,0.92);border:1px solid rgba(90,100,120,0.6)"></div>
<svg style="left:1804px;top:979px" width="12" height="12"><path d="M6 11V2M2 5.5L6 1.5L10 5.5" fill="none" stroke="#36a0f5" stroke-width="1.8"/></svg>
<div class="t" style="left:1819px;top:975px;line-height:20px;font-size:12px;color:#fff">2.1<span style="font-size:10px;color:#bbb">K/s</span></div>
<svg style="left:1804px;top:1000px" width="12" height="12"><path d="M6 1V10M2 6.5L6 10.5L10 6.5" fill="none" stroke="#3bbf4a" stroke-width="1.8"/></svg>
<div class="t" style="left:1819px;top:997px;line-height:20px;font-size:12px;color:#fff">0.2<span style="font-size:10px;color:#bbb">K/s</span></div>
<div class="a" style="left:1855px;top:967px;width:58px;height:58px;border-radius:50%;background:#283040;border:2px solid #363e50"></div>
<div class="a" style="left:1858px;top:970px;width:52px;height:52px;border-radius:50%;background:conic-gradient(from 0deg,#38c8d0 0%,#5cd090 18%,#a8d850 32%,#f0d030 50%,#f5a030 65%,#ee6a34 76%,#e05038 82%,transparent 82.2%);-webkit-mask:radial-gradient(circle,transparent 23.8px,#000 24.3px,#000 25.7px,transparent 26.2px);mask:radial-gradient(circle,transparent 23.8px,#000 24.3px,#000 25.7px,transparent 26.2px)"></div>
<div class="t" style="left:1860px;top:981px;width:50px;text-align:center;line-height:30px;font-size:24px;color:#f4f4f4">82<span style="font-size:11px">%</span></div>
<!-- ===== END DEBUGGER ===== -->



<!-- ===== EXPLORER ===== -->
<svg style="left:635px;top:123.5px" width="21" height="22"><path d="M8.5 1.5H14.5L17.5 4.5V14.5H8.5Z" fill="none" stroke="#fff" stroke-width="1.6" stroke-linejoin="round"/><path d="M8.5 5.5H4.5V19.5H12.5V14.5" fill="none" stroke="#fff" stroke-width="1.6" stroke-linejoin="round"/><path d="M14.5 1.5V4.5H17.5" fill="#fff"/></svg>
<svg style="left:676px;top:124px" width="21" height="21"><circle cx="12.5" cy="8" r="6.5" fill="none" stroke="#8a8a8a" stroke-width="1.5"/><path d="M8 12.5L1.5 19.5" stroke="#8a8a8a" stroke-width="1.5"/></svg>
<svg style="left:717px;top:124px" width="20" height="21"><circle cx="5" cy="3.5" r="2.5" fill="none" stroke="#8a8a8a" stroke-width="1.5"/><circle cx="5" cy="17" r="2.5" fill="none" stroke="#8a8a8a" stroke-width="1.5"/><circle cx="14.5" cy="7.5" r="2.5" fill="none" stroke="#8a8a8a" stroke-width="1.5"/><path d="M5 6V14.5M14.5 10C14.5 13 6.5 12 5.5 14.8" fill="none" stroke="#8a8a8a" stroke-width="1.5"/></svg>
<svg style="left:756px;top:124px" width="21" height="21"><path d="M0.9 5H8.6V19.5H0.9ZM8.6 12.2H16.6V19.5H8.6M0.9 12.2H8.6" fill="none" stroke="#8a8a8a" stroke-width="1.4" stroke-linejoin="round"/><rect x="12.8" y="0.8" width="6.8" height="7.2" rx="0.8" fill="none" stroke="#8a8a8a" stroke-width="1.4"/></svg>
<svg style="left:797px;top:125px" width="19" height="19"><rect x="1.6" y="1.5" width="14.9" height="14.9" rx="1.5" fill="none" stroke="#8a8a8a" stroke-width="1.4"/><path d="M6 1.5C6 5.5 7 7 10 7H16.5M1.6 11.5H7C9.5 11.5 10 13 10 16.4" fill="none" stroke="#8a8a8a" stroke-width="1.4"/></svg>
<svg style="left:835px;top:125px" width="22" height="17"><path d="M1 9H17C18 7 19.5 6.5 21 7C20 8.5 19.5 10 18 10.5C16 15 11 16 7 16C3.5 16 1.5 13 1 9Z" fill="#8a8a8a"/><path d="M3.5 5.5H6V8H3.5ZM6.5 5.5H9V8H6.5ZM9.5 5.5H12V8H9.5ZM6.5 2.5H9V5H6.5ZM9.5 2.5H12V5H9.5ZM9.5 -0.5H12V2H9.5ZM12.5 5.5H15V8H12.5Z" fill="#8a8a8a"/></svg>
<div class="t" style="left:651px;top:163px;line-height:24px;font-size:14px;color:#cfcfcf;-webkit-text-stroke:0.15px #cfcfcf">资源管理器</div>
<svg style="left:834px;top:173px" width="17" height="3"><circle cx="1.5" cy="1.5" r="1.3" fill="#ddd"/><circle cx="8" cy="1.5" r="1.3" fill="#ddd"/><circle cx="14.5" cy="1.5" r="1.3" fill="#ddd"/></svg>
<div class="a" style="left:626px;top:196px;width:249px;height:55px;background:#383838"></div>
<svg style="left:637px;top:205px" width="6" height="10"><path d="M0 0V10L5.5 5Z" fill="#c5c5c5"/></svg>
<div class="t" style="left:651px;top:196px;line-height:28px;font-size:14px;font-weight:bold;color:#cccccc">打开的编辑器</div>
<svg style="left:635px;top:234px" width="9" height="6"><path d="M0 0H9L4.5 5.5Z" fill="#c5c5c5"/></svg>
<div class="t" style="left:651px;top:224px;line-height:27px;font-size:14px;font-weight:bold;color:#cccccc">WXAPP</div>
<div class="a" style="left:626px;top:251px;width:249px;height:724.5px;overflow:hidden">
<div class="a" style="left:-626px;top:-251px;width:1920px;height:1033px">
<div class="a" style="left:863px;top:251px;width:12px;height:545px;background:#313131"></div>
<div class="a" style="left:671px;top:444px;width:1px;height:330px;background:#585858"></div>
<svg style="left:653px;top:260.25px" width="6" height="9"><path d="M0 0V9L5.5 4.5Z" fill="#c5c5c5"/></svg>
<svg style="left:670px;top:256.75px" width="18" height="16"><path d="M1 2.5A1.5 1.5 0 0 1 2.5 1H7L9 3H15.5A1.5 1.5 0 0 1 17 4.5V13.5A1.5 1.5 0 0 1 15.5 15H2.5A1.5 1.5 0 0 1 1 13.5Z" fill="#90a4ae"/></svg>
<div class="t" style="left:696px;top:252.5px;line-height:27.5px;font-size:16px;color:#d4d4d4">we7</div>
<svg style="left:652px;top:289.25px" width="9" height="6"><path d="M0 0H9L4.5 5.5Z" fill="#c5c5c5"/></svg>
<svg style="left:670px;top:284.25px" width="18" height="16"><path d="M1 2.5A1.5 1.5 0 0 1 2.5 1H7L9 3H15.5A1.5 1.5 0 0 1 17 4.5V6H5L1 14Z" fill="#90a4ae"/><path d="M4.5 7H18L15 15H1.5Z" fill="#90a4ae"/><path d="M1 14L4.5 7" stroke="#2d2d2d" stroke-width="0.8"/></svg>
<div class="t" style="left:696px;top:280.0px;line-height:27.5px;font-size:16px;color:#d4d4d4">zh_cjpt</div>
<svg style="left:662px;top:316.75px" width="9" height="6"><path d="M0 0H9L4.5 5.5Z" fill="#c5c5c5"/></svg>
<svg style="left:680px;top:311.75px" width="19" height="17"><path d="M1 2.5A1.5 1.5 0 0 1 2.5 1H7L9 3H15.5A1.5 1.5 0 0 1 17 4.5V6H5L1 14Z" fill="#ff7043"/><path d="M4.5 7H18L15 15H1.5Z" fill="#ff7043"/><path d="M9.5 6.5H17.5V14.5L13.5 16.5L9.5 14.5Z" fill="#ffccbc"/><path d="M12.5 9.5L11 11L12.5 12.5M14.5 9.5L16 11L14.5 12.5" fill="none" stroke="#ff5722" stroke-width="0.9"/></svg>
<div class="t" style="left:706px;top:307.5px;line-height:27.5px;font-size:16px;color:#d4d4d4">pages</div>
<svg style="left:673px;top:342.75px" width="6" height="9"><path d="M0 0V9L5.5 4.5Z" fill="#c5c5c5"/></svg>
<svg style="left:690px;top:339.25px" width="18" height="16"><path d="M1 2.5A1.5 1.5 0 0 1 2.5 1H7L9 3H15.5A1.5 1.5 0 0 1 17 4.5V13.5A1.5 1.5 0 0 1 15.5 15H2.5A1.5 1.5 0 0 1 1 13.5Z" fill="#90a4ae"/></svg>
<div class="t" style="left:716px;top:335.0px;line-height:27.5px;font-size:16px;color:#d4d4d4">BLE</div>
<svg style="left:673px;top:370.25px" width="6" height="9"><path d="M0 0V9L5.5 4.5Z" fill="#c5c5c5"/></svg>
<svg style="left:690px;top:366.75px" width="18" height="16"><path d="M1 2.5A1.5 1.5 0 0 1 2.5 1H7L9 3H15.5A1.5 1.5 0 0 1 17 4.5V13.5A1.5 1.5 0 0 1 15.5 15H2.5A1.5 1.5 0 0 1 1 13.5Z" fill="#90a4ae"/></svg>
<div class="t" style="left:716px;top:362.5px;line-height:27.5px;font-size:16px;color:#d4d4d4">distribution</div>
<svg style="left:673px;top:397.75px" width="6" height="9"><path d="M0 0V9L5.5 4.5Z" fill="#c5c5c5"/></svg>
<svg style="left:690px;top:394.25px" width="19" height="17"><path d="M1 2.5A1.5 1.5 0 0 1 2.5 1H7L9 3H15.5A1.5 1.5 0 0 1 17 4.5V13.5A1.5 1.5 0 0 1 15.5 15H2.5A1.5 1.5 0 0 1 1 13.5Z" fill="#009688"/><path d="M9 5H15L18 8V16H9Z" fill="#b2dfdb"/><circle cx="11.5" cy="9" r="1.2" fill="#009688"/><path d="M10 15L13 12L14.5 13.5L17 11V15Z" fill="#009688"/></svg>
<div class="t" style="left:716px;top:390.0px;line-height:27.5px;font-size:16px;color:#d4d4d4">img</div>
<svg style="left:672px;top:426.75px" width="9" height="6"><path d="M0 0H9L4.5 5.5Z" fill="#c5c5c5"/></svg>
<svg style="left:690px;top:421.75px" width="18" height="16"><path d="M1 2.5A1.5 1.5 0 0 1 2.5 1H7L9 3H15.5A1.5 1.5 0 0 1 17 4.5V6H5L1 14Z" fill="#90a4ae"/><path d="M4.5 7H18L15 15H1.5Z" fill="#90a4ae"/><path d="M1 14L4.5 7" stroke="#2d2d2d" stroke-width="0.8"/></svg>
<div class="t" style="left:716px;top:417.5px;line-height:27.5px;font-size:16px;color:#d4d4d4">index</div>
<svg style="left:701px;top:449.25px" width="16" height="16"><rect x="0" y="0" width="16" height="16" fill="#fbc02d"/><text x="14.5" y="14" text-anchor="end" font-family="Liberation Sans" font-size="8.5" font-weight="bold" fill="#2a2a2a">JS</text></svg>
<div class="t" style="left:726px;top:445.0px;line-height:27.5px;font-size:16px;color:#d4d4d4">index.js</div>
<svg style="left:698px;top:476.75px" width="20" height="16"><path d="M5 1.5C3 1.5 3 2.5 3 4.5V6.5C3 7.5 2 8 1 8C2 8 3 8.5 3 9.5V11.5C3 13.5 3 14.5 5 14.5M15 1.5C17 1.5 17 2.5 17 4.5V6.5C17 7.5 18 8 19 8C18 8 17 8.5 17 9.5V11.5C17 13.5 17 14.5 15 14.5" fill="none" stroke="#fbc02d" stroke-width="1.6"/><circle cx="7" cy="12" r="0.9" fill="#fbc02d"/><circle cx="10" cy="12" r="0.9" fill="#fbc02d"/><circle cx="13" cy="12" r="0.9" fill="#fbc02d"/></svg>
<div class="t" style="left:726px;top:472.5px;line-height:27.5px;font-size:16px;color:#d4d4d4">index.json</div>
<svg style="left:701px;top:504.25px" width="16" height="17"><path d="M1.5 2A1.5 1.5 0 0 1 3 0.5H10L14.5 5V15A1.5 1.5 0 0 1 13 16.5H3A1.5 1.5 0 0 1 1.5 15Z" fill="#8bc34a"/><path d="M10 0.5V5H14.5" fill="#2d2d2d" opacity=".5"/><path d="M6.5 8.5L4.5 10.8L6.5 13M9.5 8.5L11.5 10.8L9.5 13" fill="none" stroke="#2d2d2d" stroke-width="1.3"/></svg>
<div class="t" style="left:726px;top:500.0px;line-height:27.5px;font-size:16px;color:#d4d4d4">index.wxml</div>
<svg style="left:701px;top:531.75px" width="18" height="17"><path d="M1.8 0.3H16.2L14.1 12.9L6.5 16.1L0 10.6L2.8 9.6L6.6 12.6L11 10.9L11.6 8.2H1L1.5 5.2H12.2L12.8 3.3H1.4Z" fill="#42a5f5"/></svg>
<div class="t" style="left:726px;top:527.5px;line-height:27.5px;font-size:16px;color:#d4d4d4">index.wxss</div>
<div class="a" style="left:626px;top:553.5px;width:249px;height:27.5px;background:#3b3b3b"></div>
<svg style="left:701px;top:559.25px" width="16" height="16"><rect x="0" y="0" width="16" height="16" fill="#fbc02d"/><text x="14.5" y="14" text-anchor="end" font-family="Liberation Sans" font-size="8.5" font-weight="bold" fill="#2a2a2a">JS</text></svg>
<div class="t" style="left:726px;top:555.0px;line-height:27.5px;font-size:16px;color:#d4d4d4">info.js</div>
<svg style="left:698px;top:586.75px" width="20" height="16"><path d="M5 1.5C3 1.5 3 2.5 3 4.5V6.5C3 7.5 2 8 1 8C2 8 3 8.5 3 9.5V11.5C3 13.5 3 14.5 5 14.5M15 1.5C17 1.5 17 2.5 17 4.5V6.5C17 7.5 18 8 19 8C18 8 17 8.5 17 9.5V11.5C17 13.5 17 14.5 15 14.5" fill="none" stroke="#fbc02d" stroke-width="1.6"/><circle cx="7" cy="12" r="0.9" fill="#fbc02d"/><circle cx="10" cy="12" r="0.9" fill="#fbc02d"/><circle cx="13" cy="12" r="0.9" fill="#fbc02d"/></svg>
<div class="t" style="left:726px;top:582.5px;line-height:27.5px;font-size:16px;color:#d4d4d4">info.json</div>
<svg style="left:701px;top:614.25px" width="16" height="17"><path d="M1.5 2A1.5 1.5 0 0 1 3 0.5H10L14.5 5V15A1.5 1.5 0 0 1 13 16.5H3A1.5 1.5 0 0 1 1.5 15Z" fill="#8bc34a"/><path d="M10 0.5V5H14.5" fill="#2d2d2d" opacity=".5"/><path d="M6.5 8.5L4.5 10.8L6.5 13M9.5 8.5L11.5 10.8L9.5 13" fill="none" stroke="#2d2d2d" stroke-width="1.3"/></svg>
<div class="t" style="left:726px;top:610.0px;line-height:27.5px;font-size:16px;color:#d4d4d4">info.wxml</div>
<svg style="left:701px;top:641.75px" width="18" height="17"><path d="M1.8 0.3H16.2L14.1 12.9L6.5 16.1L0 10.6L2.8 9.6L6.6 12.6L11 10.9L11.6 8.2H1L1.5 5.2H12.2L12.8 3.3H1.4Z" fill="#42a5f5"/></svg>
<div class="t" style="left:726px;top:637.5px;line-height:27.5px;font-size:16px;color:#d4d4d4">info.wxss</div>
<svg style="left:701px;top:669.25px" width="16" height="16"><rect x="0" y="0" width="16" height="16" fill="#fbc02d"/><text x="14.5" y="14" text-anchor="end" font-family="Liberation Sans" font-size="8.5" font-weight="bold" fill="#2a2a2a">JS</text></svg>
<div class="t" style="left:726px;top:665.0px;line-height:27.5px;font-size:16px;color:#d4d4d4">order_info.js</div>
<svg style="left:698px;top:696.75px" width="20" height="16"><path d="M5 1.5C3 1.5 3 2.5 3 4.5V6.5C3 7.5 2 8 1 8C2 8 3 8.5 3 9.5V11.5C3 13.5 3 14.5 5 14.5M15 1.5C17 1.5 17 2.5 17 4.5V6.5C17 7.5 18 8 19 8C18 8 17 8.5 17 9.5V11.5C17 13.5 17 14.5 15 14.5" fill="none" stroke="#fbc02d" stroke-width="1.6"/><circle cx="7" cy="12" r="0.9" fill="#fbc02d"/><circle cx="10" cy="12" r="0.9" fill="#fbc02d"/><circle cx="13" cy="12" r="0.9" fill="#fbc02d"/></svg>
<div class="t" style="left:726px;top:692.5px;line-height:27.5px;font-size:16px;color:#d4d4d4">order_info.json</div>
<svg style="left:701px;top:724.25px" width="16" height="17"><path d="M1.5 2A1.5 1.5 0 0 1 3 0.5H10L14.5 5V15A1.5 1.5 0 0 1 13 16.5H3A1.5 1.5 0 0 1 1.5 15Z" fill="#8bc34a"/><path d="M10 0.5V5H14.5" fill="#2d2d2d" opacity=".5"/><path d="M6.5 8.5L4.5 10.8L6.5 13M9.5 8.5L11.5 10.8L9.5 13" fill="none" stroke="#2d2d2d" stroke-width="1.3"/></svg>
<div class="t" style="left:726px;top:720.0px;line-height:27.5px;font-size:16px;color:#d4d4d4">order_info.wxml</div>
<svg style="left:701px;top:751.75px" width="18" height="17"><path d="M1.8 0.3H16.2L14.1 12.9L6.5 16.1L0 10.6L2.8 9.6L6.6 12.6L11 10.9L11.6 8.2H1L1.5 5.2H12.2L12.8 3.3H1.4Z" fill="#42a5f5"/></svg>
<div class="t" style="left:726px;top:747.5px;line-height:27.5px;font-size:16px;color:#d4d4d4">order_info.wxss</div>
<svg style="left:673px;top:782.75px" width="6" height="9"><path d="M0 0V9L5.5 4.5Z" fill="#c5c5c5"/></svg>
<svg style="left:690px;top:779.25px" width="18" height="16"><path d="M1 2.5A1.5 1.5 0 0 1 2.5 1H7L9 3H15.5A1.5 1.5 0 0 1 17 4.5V13.5A1.5 1.5 0 0 1 15.5 15H2.5A1.5 1.5 0 0 1 1 13.5Z" fill="#90a4ae"/></svg>
<div class="t" style="left:716px;top:775.0px;line-height:27.5px;font-size:16px;color:#d4d4d4">Invitation</div>
<svg style="left:673px;top:810.25px" width="6" height="9"><path d="M0 0V9L5.5 4.5Z" fill="#c5c5c5"/></svg>
<svg style="left:690px;top:806.75px" width="19" height="17"><path d="M1 2.5A1.5 1.5 0 0 1 2.5 1H7L9 3H15.5A1.5 1.5 0 0 1 17 4.5V13.5A1.5 1.5 0 0 1 15.5 15H2.5A1.5 1.5 0 0 1 1 13.5Z" fill="#c0ca33"/><rect x="9" y="6" width="9" height="10" fill="#f0f4c3"/><path d="M10.5 9H16.5M10.5 11.5H16.5M10.5 14H14.5" stroke="#c0ca33" stroke-width="1"/></svg>
<div class="t" style="left:716px;top:802.5px;line-height:27.5px;font-size:16px;color:#d4d4d4">logs</div>
<svg style="left:673px;top:837.75px" width="6" height="9"><path d="M0 0V9L5.5 4.5Z" fill="#c5c5c5"/></svg>
<svg style="left:690px;top:834.25px" width="18" height="16"><path d="M1 2.5A1.5 1.5 0 0 1 2.5 1H7L9 3H15.5A1.5 1.5 0 0 1 17 4.5V13.5A1.5 1.5 0 0 1 15.5 15H2.5A1.5 1.5 0 0 1 1 13.5Z" fill="#90a4ae"/></svg>
<div class="t" style="left:716px;top:830.0px;line-height:27.5px;font-size:16px;color:#d4d4d4">mine</div>
<svg style="left:673px;top:865.25px" width="6" height="9"><path d="M0 0V9L5.5 4.5Z" fill="#c5c5c5"/></svg>
<svg style="left:690px;top:861.75px" width="18" height="16"><path d="M1 2.5A1.5 1.5 0 0 1 2.5 1H7L9 3H15.5A1.5 1.5 0 0 1 17 4.5V13.5A1.5 1.5 0 0 1 15.5 15H2.5A1.5 1.5 0 0 1 1 13.5Z" fill="#90a4ae"/></svg>
<div class="t" style="left:716px;top:857.5px;line-height:27.5px;font-size:16px;color:#d4d4d4">route</div>
<svg style="left:673px;top:892.75px" width="6" height="9"><path d="M0 0V9L5.5 4.5Z" fill="#c5c5c5"/></svg>
<svg style="left:690px;top:889.25px" width="18" height="16"><path d="M1 2.5A1.5 1.5 0 0 1 2.5 1H7L9 3H15.5A1.5 1.5 0 0 1 17 4.5V13.5A1.5 1.5 0 0 1 15.5 15H2.5A1.5 1.5 0 0 1 1 13.5Z" fill="#90a4ae"/></svg>
<div class="t" style="left:716px;top:885.0px;line-height:27.5px;font-size:16px;color:#d4d4d4">tabbar</div>
<svg style="left:662px;top:921.75px" width="9" height="6"><path d="M0 0H9L4.5 5.5Z" fill="#c5c5c5"/></svg>
<svg style="left:680px;top:916.75px" width="19" height="17"><path d="M1 2.5A1.5 1.5 0 0 1 2.5 1H7L9 3H15.5A1.5 1.5 0 0 1 17 4.5V6H5L1 14Z" fill="#7cb342"/><path d="M4.5 7H18L15 15H1.5Z" fill="#7cb342"/><rect x="9" y="7" width="9" height="9" fill="#dcedc8"/><path d="M13.5 8.5V14.5M10.5 11.5H16.5" stroke="#7cb342" stroke-width="1.3"/></svg>
<div class="t" style="left:706px;top:912.5px;line-height:27.5px;font-size:16px;color:#d4d4d4">utils</div>
<svg style="left:691px;top:944.25px" width="16" height="16"><rect x="0" y="0" width="16" height="16" fill="#fbc02d"/><text x="14.5" y="14" text-anchor="end" font-family="Liberation Sans" font-size="8.5" font-weight="bold" fill="#2a2a2a">JS</text></svg>
<div class="t" style="left:716px;top:940.0px;line-height:27.5px;font-size:16px;color:#d4d4d4">amap-wx.js</div>
<svg style="left:691px;top:971.75px" width="16" height="16"><rect x="0" y="0" width="16" height="16" fill="#fbc02d"/><text x="14.5" y="14" text-anchor="end" font-family="Liberation Sans" font-size="8.5" font-weight="bold" fill="#2a2a2a">JS</text></svg>
<div class="t" style="left:716px;top:967.5px;line-height:27.5px;font-size:16px;color:#d4d4d4">siteinfo.js</div>
</div>
</div>
<div class="a" style="left:626px;top:975.5px;width:249px;height:22.5px;background:#383838"></div>
<svg style="left:637px;top:986px" width="6" height="10"><path d="M0 0V10L5.5 5Z" fill="#c5c5c5"/></svg>
<div class="t" style="left:651px;top:977px;line-height:28px;font-size:14px;font-weight:bold;color:#cccccc">大纲</div>
<!-- status bar left -->
<svg style="left:646px;top:1006px" width="17" height="17"><circle cx="8.5" cy="8.5" r="7.5" fill="none" stroke="#aaa" stroke-width="1.2"/><path d="M5.5 5.5L11.5 11.5M11.5 5.5L5.5 11.5" stroke="#aaa" stroke-width="1.2"/></svg>
<div class="t" style="left:666px;top:998px;line-height:33px;font-size:15px;color:#aaa">0</div>
<svg style="left:680px;top:1006px" width="17" height="16"><path d="M8.5 1L16 15H1Z" fill="none" stroke="#aaa" stroke-width="1.2" stroke-linejoin="round"/><path d="M8.5 5.5V10.5M8.5 12V13.3" stroke="#aaa" stroke-width="1.3"/></svg>
<div class="t" style="left:700px;top:998px;line-height:33px;font-size:15px;color:#aaa">0</div>
<!-- ===== END EXPLORER ===== -->

<!-- ===== EDITOR ===== -->
<div class="a" style="left:875px;top:115px;width:150px;height:38px;background:#383838"></div>
<div class="a" style="left:1025px;top:115px;width:151px;height:38px;background:#2c2c2c"></div>
<div class="a" style="left:1176px;top:115px;width:149px;height:38px;background:#383838"></div>
<div class="a" style="left:1325px;top:115px;width:1px;height:38px;background:#2a2a2a"></div>
<svg style="left:891px;top:126px" width="16" height="16"><rect width="16" height="16" fill="#fbc02d"/><text x="14.5" y="14" text-anchor="end" font-family="Liberation Sans" font-size="8.5" font-weight="bold" fill="#2a2a2a">JS</text></svg>
<div class="t" style="left:916px;top:115px;line-height:38px;font-size:16px;color:#a9a9a9">siteinfo.js</div>
<svg style="left:1041px;top:126px" width="16" height="16"><rect width="16" height="16" fill="#fbc02d"/><text x="14.5" y="14" text-anchor="end" font-family="Liberation Sans" font-size="8.5" font-weight="bold" fill="#2a2a2a">JS</text></svg>
<div class="t" style="left:1066px;top:115px;line-height:38px;font-size:16px;font-style:italic;color:#ffffff">info.js</div>
<svg style="left:1149px;top:128px" width="13" height="13"><path d="M1 1L12 12M12 1L1 12" stroke="#fff" stroke-width="1.6"/></svg>
<svg style="left:1188px;top:126px" width="21" height="17"><path d="M5 1.5C3 1.5 3 2.5 3 4.5V6.5C3 7.5 2 8.5 1 8.5C2 8.5 3 9.5 3 10.5V12.5C3 14.5 3 15.5 5 15.5M16 1.5C18 1.5 18 2.5 18 4.5V6.5C18 7.5 19 8.5 20 8.5C19 8.5 18 9.5 18 10.5V12.5C18 14.5 18 15.5 16 15.5" fill="none" stroke="#fbc02d" stroke-width="1.6"/><circle cx="7.5" cy="13" r="0.9" fill="#fbc02d"/><circle cx="10.5" cy="13" r="0.9" fill="#fbc02d"/><circle cx="13.5" cy="13" r="0.9" fill="#fbc02d"/></svg>
<div class="t" style="left:1216px;top:115px;line-height:38px;font-size:16px;color:#a9a9a9">app.json</div>
<svg style="left:1838px;top:126px" width="17" height="17"><rect x="1" y="1" width="15" height="15" rx="1" fill="none" stroke="#ddd" stroke-width="1.6"/><path d="M8.5 1V16" stroke="#ddd" stroke-width="1.6"/></svg>
<svg style="left:1878px;top:133px" width="17" height="3"><circle cx="1.5" cy="1.5" r="1.4" fill="#ddd"/><circle cx="8.5" cy="1.5" r="1.4" fill="#ddd"/><circle cx="15.5" cy="1.5" r="1.4" fill="#ddd"/></svg>
<!-- breadcrumbs -->
<svg style="left:886px;top:158px" width="18" height="15"><path d="M0 1.5H2M0 5.5H2M0 9.5H2M0 13.5H2" stroke="#aaa" stroke-width="1.2"/><path d="M4 1.5H18M4 5.5H18M4 9.5H18M4 13.5H18" stroke="#aaa" stroke-width="1.3"/></svg>
<svg style="left:926px;top:157px" width="14" height="18"><path d="M1 1H13V17L7 11L1 17Z" fill="none" stroke="#aaa" stroke-width="1.5" stroke-linejoin="round"/></svg>
<svg style="left:961px;top:160px" width="18" height="14"><path d="M17 7H2M7.5 1.5L2 7L7.5 12.5" fill="none" stroke="#999" stroke-width="1.4"/></svg>
<svg style="left:996px;top:160px" width="18" height="14"><path d="M1 7H16M10.5 1.5L16 7L10.5 12.5" fill="none" stroke="#999" stroke-width="1.4"/></svg>
<div class="t" style="left:1034px;top:153px;line-height:28px;font-size:16px;color:#878787">zh_cjpt</div>
<svg style="left:1090px;top:160px" width="8" height="14"><path d="M1 1L7 7L1 13" fill="none" stroke="#888" stroke-width="1.2"/></svg>
<div class="t" style="left:1104px;top:153px;line-height:28px;font-size:16px;color:#878787">pages</div>
<svg style="left:1152px;top:160px" width="8" height="14"><path d="M1 1L7 7L1 13" fill="none" stroke="#888" stroke-width="1.2"/></svg>
<div class="t" style="left:1166px;top:153px;line-height:28px;font-size:16px;color:#878787">index</div>
<svg style="left:1211px;top:160px" width="8" height="14"><path d="M1 1L7 7L1 13" fill="none" stroke="#888" stroke-width="1.2"/></svg>
<svg style="left:1227px;top:158px" width="16" height="16"><rect width="16" height="16" fill="#fbc02d"/><text x="14.5" y="14" text-anchor="end" font-family="Liberation Sans" font-size="8.5" font-weight="bold" fill="#2a2a2a">JS</text></svg>
<div class="t" style="left:1253px;top:153px;line-height:28px;font-size:16px;color:#cccccc">info.js</div>
<svg style="left:1301px;top:160px" width="8" height="14"><path d="M1 1L7 7L1 13" fill="none" stroke="#aaa" stroke-width="1.2"/></svg>
<div class="t" style="left:1315px;top:153px;line-height:28px;font-size:16px;color:#aaaaaa">...</div>
<!-- overview ruler -->
<div class="a" style="left:1901px;top:180px;width:1px;height:451px;background:#3a3a3a"></div>
<div class="a" style="left:875px;top:153px;width:1px;height:478px;background:#262626"></div>

<div class="a" style="left:964px;top:270px;width:1px;height:361px;background:#454545"></div>
<div class="a" style="left:997px;top:330px;width:1px;height:301px;background:#454545"></div>
<div class="a" style="left:1030px;top:450px;width:1px;height:120px;background:#454545"></div>
<div class="a" style="left:1030px;top:600px;width:1px;height:31px;background:#454545"></div>
<div class="a" style="left:1063px;top:480px;width:1px;height:60px;background:#454545"></div>

<div class="t mono" style="left:880px;top:181.5px;width:51px;text-align:right;line-height:30px;font-size:13.5px;color:#595959">1</div>
<div class="t mono" style="left:964px;top:182px;line-height:30px;font-size:13.75px"><span style="color:#eedc6a">var</span><span style="color:#d6d6d6">&nbsp;amapFile</span><span style="color:#eedc6a">&nbsp;=</span><span style="color:#d6d6d6">&nbsp;</span><span style="color:#f4a24c">require</span><span style="color:#f2c21c">(</span><span style="color:#62c3f3">"</span><span style="color:#f26b5b">../../utils/amap-wx.js</span><span style="color:#62c3f3">"</span><span style="color:#f2c21c">)</span><span style="color:#d6d6d6">,</span><span style="color:#d6d6d6">&nbsp;app</span><span style="color:#eedc6a">&nbsp;=</span><span style="color:#d6d6d6">&nbsp;</span><span style="color:#f4a24c">getApp</span><span style="color:#f2c21c">()</span><span style="color:#62c3f3">;</span></div>
<div class="t mono" style="left:880px;top:211.5px;width:51px;text-align:right;line-height:30px;font-size:13.5px;color:#595959">2</div>
<div class="t mono" style="left:880px;top:241.5px;width:51px;text-align:right;line-height:30px;font-size:13.5px;color:#595959">3</div>
<div class="t mono" style="left:964px;top:242px;line-height:30px;font-size:13.75px"><span style="color:#f4a24c">Page</span><span style="color:#f2c21c">(</span><span style="color:#d36be3">{</span></div>
<svg style="left:940px;top:248px" width="14" height="9"><path d="M1 1L7 7L13 1" fill="none" stroke="#c5c5c5" stroke-width="1.4"/></svg>
<div class="t mono" style="left:880px;top:271.5px;width:51px;text-align:right;line-height:30px;font-size:13.5px;color:#595959">4</div>
<div class="t mono" style="left:964px;top:272px;line-height:30px;font-size:13.75px"><span style="color:#d6d6d6">&nbsp;&nbsp;&nbsp;&nbsp;data</span><span style="color:#62c3f3">:</span><span style="color:#d6d6d6">&nbsp;</span><span style="color:#62c3f3">{}</span><span style="color:#d6d6d6">,</span></div>
<div class="t mono" style="left:880px;top:301.5px;width:51px;text-align:right;line-height:30px;font-size:13.5px;color:#595959">5</div>
<div class="t mono" style="left:964px;top:302px;line-height:30px;font-size:13.75px"><span style="color:#f4a24c">&nbsp;&nbsp;&nbsp;&nbsp;onLoad</span><span style="color:#62c3f3">:</span><span style="color:#d6d6d6">&nbsp;</span><span style="color:#eedc6a">function</span><span style="color:#62c3f3">(</span><span style="color:#f08070">a</span><span style="color:#62c3f3">)</span><span style="color:#d6d6d6">&nbsp;</span><span style="color:#62c3f3">{</span></div>
<svg style="left:940px;top:308px" width="14" height="9"><path d="M1 1L7 7L13 1" fill="none" stroke="#c5c5c5" stroke-width="1.4"/></svg>
<div class="t mono" style="left:880px;top:331.5px;width:51px;text-align:right;line-height:30px;font-size:13.5px;color:#595959">6</div>
<div class="t mono" style="left:964px;top:332px;line-height:30px;font-size:13.75px"><span style="color:#eedc6a">&nbsp;&nbsp;&nbsp;&nbsp;&nbsp;&nbsp;&nbsp;&nbsp;var</span><span style="color:#d6d6d6">&nbsp;i</span><span style="color:#eedc6a">&nbsp;=</span><span style="color:#d6d6d6">&nbsp;</span><span style="color:#62c3f3">this</span><span style="color:#62c3f3">;</span></div>
<div class="t mono" style="left:880px;top:361.5px;width:51px;text-align:right;line-height:30px;font-size:13.5px;color:#595959">7</div>
<div class="t mono" style="left:964px;top:362px;line-height:30px;font-size:13.75px"><span style="color:#d6d6d6">&nbsp;&nbsp;&nbsp;&nbsp;&nbsp;&nbsp;&nbsp;&nbsp;wx</span><span style="color:#62c3f3">.</span><span style="color:#f4a24c">hideShareMenu</span><span style="color:#f2c21c">()</span><span style="color:#d6d6d6">,</span><span style="color:#d6d6d6">&nbsp;console</span><span style="color:#62c3f3">.</span><span style="color:#f4a24c">log</span><span style="color:#f2c21c">(</span><span style="color:#d6d6d6">a</span><span style="color:#f2c21c">)</span><span style="color:#62c3f3">;</span></div>
<div class="t mono" style="left:880px;top:391.5px;width:51px;text-align:right;line-height:30px;font-size:13.5px;color:#595959">8</div>
<div class="t mono" style="left:964px;top:392px;line-height:30px;font-size:13.75px"><span style="color:#eedc6a">&nbsp;&nbsp;&nbsp;&nbsp;&nbsp;&nbsp;&nbsp;&nbsp;var</span><span style="color:#d6d6d6">&nbsp;s</span><span style="color:#eedc6a">&nbsp;=</span><span style="color:#d6d6d6">&nbsp;</span><span style="color:#62c3f3">"</span><span style="color:#f26b5b">30.527259,114.324417</span><span style="color:#62c3f3">"</span><span style="color:#62c3f3">;</span></div>
<div class="t mono" style="left:880px;top:421.5px;width:51px;text-align:right;line-height:30px;font-size:13.5px;color:#595959">9</div>
<div class="t mono" style="left:964px;top:422px;line-height:30px;font-size:13.75px"><span style="color:#d6d6d6">&nbsp;&nbsp;&nbsp;&nbsp;&nbsp;&nbsp;&nbsp;&nbsp;app</span><span style="color:#62c3f3">.</span><span style="color:#f4a24c">g_t</span><span style="color:#f2c21c">(</span><span style="color:#eedc6a">function</span><span style="color:#d36be3">(</span><span style="color:#f08070">t</span><span style="color:#d36be3">)</span><span style="color:#d6d6d6">&nbsp;</span><span style="color:#d36be3">{</span></div>
<svg style="left:940px;top:428px" width="14" height="9"><path d="M1 1L7 7L13 1" fill="none" stroke="#c5c5c5" stroke-width="1.4"/></svg>
<div class="t mono" style="left:880px;top:451.5px;width:51px;text-align:right;line-height:30px;font-size:13.5px;color:#595959">10</div>
<div class="t mono" style="left:964px;top:452px;line-height:30px;font-size:13.75px"><span style="color:#d6d6d6">&nbsp;&nbsp;&nbsp;&nbsp;&nbsp;&nbsp;&nbsp;&nbsp;&nbsp;&nbsp;&nbsp;&nbsp;i</span><span style="color:#62c3f3">.</span><span style="color:#f4a24c">setData</span><span style="color:#f2c21c">(</span><span style="color:#f2c21c">{</span></div>
<svg style="left:940px;top:458px" width="14" height="9"><path d="M1 1L7 7L13 1" fill="none" stroke="#c5c5c5" stroke-width="1.4"/></svg>
<div class="t mono" style="left:880px;top:481.5px;width:51px;text-align:right;line-height:30px;font-size:13.5px;color:#595959">11</div>
<div class="t mono" style="left:964px;top:482px;line-height:30px;font-size:13.75px"><span style="color:#d6d6d6">&nbsp;&nbsp;&nbsp;&nbsp;&nbsp;&nbsp;&nbsp;&nbsp;&nbsp;&nbsp;&nbsp;&nbsp;&nbsp;&nbsp;&nbsp;&nbsp;latitude</span><span style="color:#62c3f3">:</span><span style="color:#d6d6d6">&nbsp;</span><span style="color:#62c3f3">Number</span><span style="color:#d36be3">(</span><span style="color:#d6d6d6">t</span><span style="color:#62c3f3">.</span><span style="color:#f4a24c">split</span><span style="color:#62c3f3">(</span><span style="color:#62c3f3">"</span><span style="color:#f26b5b">,</span><span style="color:#62c3f3">"</span><span style="color:#62c3f3">)</span><span style="color:#62c3f3">[</span><span style="color:#f26b5b">0</span><span style="color:#62c3f3">]</span><span style="color:#d36be3">)</span><span style="color:#62c3f3">,</span></div>
<div class="t mono" style="left:880px;top:511.5px;width:51px;text-align:right;line-height:30px;font-size:13.5px;color:#595959">12</div>
<div class="t mono" style="left:964px;top:512px;line-height:30px;font-size:13.75px"><span style="color:#d6d6d6">&nbsp;&nbsp;&nbsp;&nbsp;&nbsp;&nbsp;&nbsp;&nbsp;&nbsp;&nbsp;&nbsp;&nbsp;&nbsp;&nbsp;&nbsp;&nbsp;longitude</span><span style="color:#62c3f3">:</span><span style="color:#d6d6d6">&nbsp;</span><span style="color:#62c3f3">Number</span><span style="color:#d36be3">(</span><span style="color:#d6d6d6">t</span><span style="color:#62c3f3">.</span><span style="color:#f4a24c">split</span><span style="color:#62c3f3">(</span><span style="color:#62c3f3">"</span><span style="color:#f26b5b">,</span><span style="color:#62c3f3">"</span><span style="color:#62c3f3">)</span><span style="color:#62c3f3">[</span><span style="color:#f26b5b">1</span><span style="color:#62c3f3">]</span><span style="color:#d36be3">)</span></div>
<div class="t mono" style="left:880px;top:541.5px;width:51px;text-align:right;line-height:30px;font-size:13.5px;color:#595959">13</div>
<div class="t mono" style="left:964px;top:542px;line-height:30px;font-size:13.75px"><span style="color:#f2c21c">&nbsp;&nbsp;&nbsp;&nbsp;&nbsp;&nbsp;&nbsp;&nbsp;&nbsp;&nbsp;&nbsp;&nbsp;}</span><span style="color:#f2c21c">)</span><span style="color:#62c3f3">;</span></div>
<div class="t mono" style="left:880px;top:571.5px;width:51px;text-align:right;line-height:30px;font-size:13.5px;color:#595959">14</div>
<div class="t mono" style="left:964px;top:572px;line-height:30px;font-size:13.75px"><span style="color:#d36be3">&nbsp;&nbsp;&nbsp;&nbsp;&nbsp;&nbsp;&nbsp;&nbsp;}</span><span style="color:#f2c21c">)</span><span style="color:#d6d6d6">,</span><span style="color:#d6d6d6">&nbsp;app</span><span style="color:#62c3f3">.</span><span style="color:#f4a24c">getSystem</span><span style="color:#f2c21c">(</span><span style="color:#eedc6a">function</span><span style="color:#d36be3">(</span><span style="color:#f08070">t</span><span style="color:#d36be3">)</span><span style="color:#d6d6d6">&nbsp;</span><span style="color:#d36be3">{</span></div>
<svg style="left:940px;top:578px" width="14" height="9"><path d="M1 1L7 7L13 1" fill="none" stroke="#c5c5c5" stroke-width="1.4"/></svg>
<div class="t mono" style="left:880px;top:601.5px;width:51px;text-align:right;line-height:30px;font-size:13.5px;color:#595959">15</div>
<div class="t mono" style="left:964px;top:602px;line-height:30px;font-size:13.75px"><span style="color:#d6d6d6">&nbsp;&nbsp;&nbsp;&nbsp;&nbsp;&nbsp;&nbsp;&nbsp;&nbsp;&nbsp;&nbsp;&nbsp;i</span><span style="color:#62c3f3">.</span><span style="color:#f4a24c">setData</span><span style="color:#f2c21c">(</span><span style="color:#f2c21c">{</span></div>
<svg style="left:940px;top:608px" width="14" height="9"><path d="M1 1L7 7L13 1" fill="none" stroke="#c5c5c5" stroke-width="1.4"/></svg>
<svg style="left:1087px;top:206px" width="14" height="4"><circle cx="2" cy="2" r="1.1" fill="#bbb"/><circle cx="7" cy="2" r="1.1" fill="#bbb"/><circle cx="12" cy="2" r="1.1" fill="#bbb"/></svg>
<!-- ===== END EDITOR ===== -->
</body></html>
